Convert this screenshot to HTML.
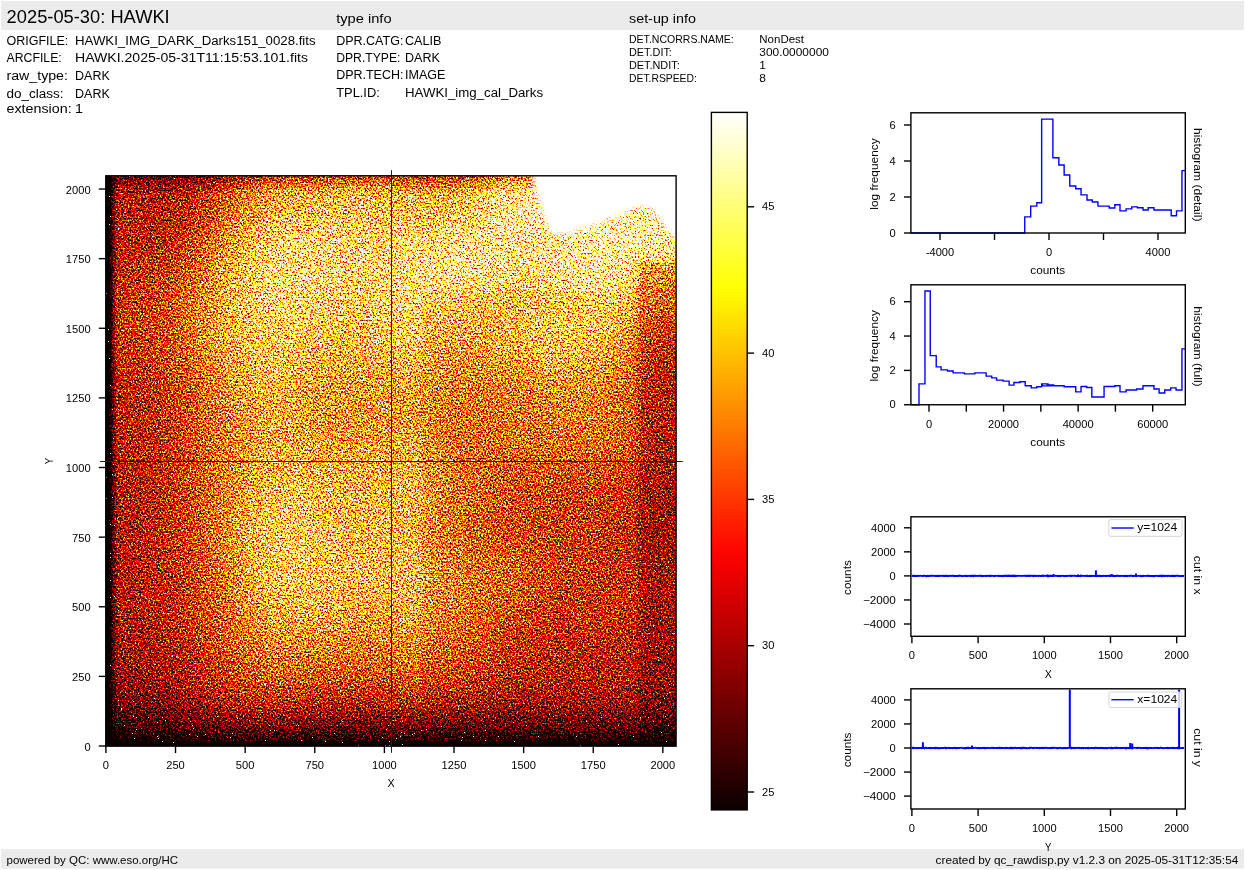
<!DOCTYPE html>
<html><head><meta charset="utf-8"><style>
html,body{margin:0;padding:0;background:#fff;width:1245px;height:870px;overflow:hidden}
svg{display:block;will-change:transform}
text{font-family:"Liberation Sans",sans-serif;}
</style></head><body>
<svg width="1245" height="870" viewBox="0 0 1245 870">
<defs><linearGradient id="hotgrad" x1="0" y1="0" x2="0" y2="1"><stop offset="0.0000" stop-color="rgb(255,255,255)"/><stop offset="0.0250" stop-color="rgb(255,255,230)"/><stop offset="0.0500" stop-color="rgb(255,255,205)"/><stop offset="0.0750" stop-color="rgb(255,255,180)"/><stop offset="0.1000" stop-color="rgb(255,255,155)"/><stop offset="0.1250" stop-color="rgb(255,255,129)"/><stop offset="0.1500" stop-color="rgb(255,255,104)"/><stop offset="0.1750" stop-color="rgb(255,255,79)"/><stop offset="0.2000" stop-color="rgb(255,255,54)"/><stop offset="0.2250" stop-color="rgb(255,255,29)"/><stop offset="0.2500" stop-color="rgb(255,255,4)"/><stop offset="0.2750" stop-color="rgb(255,241,0)"/><stop offset="0.3000" stop-color="rgb(255,224,0)"/><stop offset="0.3250" stop-color="rgb(255,207,0)"/><stop offset="0.3500" stop-color="rgb(255,191,0)"/><stop offset="0.3750" stop-color="rgb(255,174,0)"/><stop offset="0.4000" stop-color="rgb(255,157,0)"/><stop offset="0.4250" stop-color="rgb(255,141,0)"/><stop offset="0.4500" stop-color="rgb(255,124,0)"/><stop offset="0.4750" stop-color="rgb(255,107,0)"/><stop offset="0.5000" stop-color="rgb(255,90,0)"/><stop offset="0.5250" stop-color="rgb(255,74,0)"/><stop offset="0.5500" stop-color="rgb(255,57,0)"/><stop offset="0.5750" stop-color="rgb(255,40,0)"/><stop offset="0.6000" stop-color="rgb(255,23,0)"/><stop offset="0.6250" stop-color="rgb(255,7,0)"/><stop offset="0.6500" stop-color="rgb(245,0,0)"/><stop offset="0.6750" stop-color="rgb(228,0,0)"/><stop offset="0.7000" stop-color="rgb(211,0,0)"/><stop offset="0.7250" stop-color="rgb(195,0,0)"/><stop offset="0.7500" stop-color="rgb(178,0,0)"/><stop offset="0.7750" stop-color="rgb(161,0,0)"/><stop offset="0.8000" stop-color="rgb(144,0,0)"/><stop offset="0.8250" stop-color="rgb(128,0,0)"/><stop offset="0.8500" stop-color="rgb(111,0,0)"/><stop offset="0.8750" stop-color="rgb(94,0,0)"/><stop offset="0.9000" stop-color="rgb(78,0,0)"/><stop offset="0.9250" stop-color="rgb(61,0,0)"/><stop offset="0.9500" stop-color="rgb(44,0,0)"/><stop offset="0.9750" stop-color="rgb(27,0,0)"/><stop offset="1.0000" stop-color="rgb(11,0,0)"/></linearGradient></defs><defs>
<filter id="fblur" x="-20%" y="-20%" width="140%" height="140%" color-interpolation-filters="sRGB"><feGaussianBlur stdDeviation="9"/></filter>
<filter id="fsoft" x="-20%" y="-20%" width="140%" height="140%" color-interpolation-filters="sRGB"><feGaussianBlur stdDeviation="2.5"/></filter>
<filter id="fhot" x="0" y="0" width="1" height="1" filterUnits="objectBoundingBox" color-interpolation-filters="sRGB">
<feTurbulence type="fractalNoise" baseFrequency="0.6" numOctaves="2" seed="7" result="tn"/>
<feColorMatrix in="tn" type="matrix" values="1 0 0 0 0 1 0 0 0 0 1 0 0 0 0 0 0 0 0 1" result="ng"/>
<feComposite in="SourceGraphic" in2="ng" operator="arithmetic" k1="1.3495" k2="0.6253" k3="1.1592" k4="-0.8796" result="v"/>
<feTurbulence type="fractalNoise" baseFrequency="0.75" numOctaves="2" seed="23" result="tn2"/>
<feColorMatrix in="tn2" type="matrix" values="1 0 0 0 0 1 0 0 0 0 1 0 0 0 0 0 0 0 0 1" result="ng2"/>
<feComponentTransfer in="ng2" result="hotpx"><feFuncR type="discrete" tableValues="0 0 0 0 1"/><feFuncG type="discrete" tableValues="0 0 0 0 1"/><feFuncB type="discrete" tableValues="0 0 0 0 1"/><feFuncA type="linear" slope="0" intercept="1"/></feComponentTransfer>
<feComposite in="v" in2="hotpx" operator="arithmetic" k1="0" k2="1" k3="1" k4="0" result="v2"/>
<feComponentTransfer in="v2">
<feFuncR type="table" tableValues="0.0416 0.0833 0.1249 0.1666 0.2083 0.2499 0.2916 0.3333 0.3750 0.4166 0.4583 0.5000 0.5416 0.5833 0.6250 0.6666 0.7083 0.7500 0.7917 0.8333 0.8750 0.9167 0.9583 1.0000 1.0000 1.0000 1.0000 1.0000 1.0000 1.0000 1.0000 1.0000 1.0000 1.0000 1.0000 1.0000 1.0000 1.0000 1.0000 1.0000 1.0000 1.0000 1.0000 1.0000 1.0000 1.0000 1.0000 1.0000 1.0000 1.0000 1.0000 1.0000 1.0000 1.0000 1.0000 1.0000 1.0000 1.0000 1.0000 1.0000 1.0000 1.0000 1.0000 1.0000"/>
<feFuncG type="table" tableValues="0.0000 0.0000 0.0000 0.0000 0.0000 0.0000 0.0000 0.0000 0.0000 0.0000 0.0000 0.0000 0.0000 0.0000 0.0000 0.0000 0.0000 0.0000 0.0000 0.0000 0.0000 0.0000 0.0000 0.0000 0.0417 0.0833 0.1250 0.1667 0.2083 0.2500 0.2917 0.3333 0.3750 0.4167 0.4583 0.5000 0.5417 0.5833 0.6250 0.6667 0.7083 0.7500 0.7917 0.8333 0.8750 0.9167 0.9583 1.0000 1.0000 1.0000 1.0000 1.0000 1.0000 1.0000 1.0000 1.0000 1.0000 1.0000 1.0000 1.0000 1.0000 1.0000 1.0000 1.0000"/>
<feFuncB type="table" tableValues="0.0000 0.0000 0.0000 0.0000 0.0000 0.0000 0.0000 0.0000 0.0000 0.0000 0.0000 0.0000 0.0000 0.0000 0.0000 0.0000 0.0000 0.0000 0.0000 0.0000 0.0000 0.0000 0.0000 0.0000 0.0000 0.0000 0.0000 0.0000 0.0000 0.0000 0.0000 0.0000 0.0000 0.0000 0.0000 0.0000 0.0000 0.0000 0.0000 0.0000 0.0000 0.0000 0.0000 0.0000 0.0000 0.0000 0.0000 0.0000 0.0625 0.1250 0.1875 0.2500 0.3125 0.3750 0.4375 0.5000 0.5625 0.6250 0.6875 0.7500 0.8125 0.8750 0.9375 1.0000"/>
<feFuncA type="linear" slope="0" intercept="1"/>
</feComponentTransfer>
</filter>
<clipPath id="hmclip"><rect x="105.76" y="175.8" width="570.34" height="570.34"/></clipPath>
<linearGradient id="gleft" x1="0" y1="0" x2="1" y2="0"><stop offset="0" stop-color="#000" stop-opacity="0.85"/><stop offset="0.4" stop-color="#000" stop-opacity="0.4"/><stop offset="1" stop-color="#000" stop-opacity="0"/></linearGradient>
<linearGradient id="gbot" x1="0" y1="1" x2="0" y2="0"><stop offset="0" stop-color="#000" stop-opacity="0.6"/><stop offset="0.25" stop-color="#000" stop-opacity="0.3"/><stop offset="0.6" stop-color="#000" stop-opacity="0.08"/><stop offset="1" stop-color="#000" stop-opacity="0"/></linearGradient><linearGradient id="gtop" x1="0" y1="0" x2="0" y2="1"><stop offset="0" stop-color="#000" stop-opacity="0.4"/><stop offset="1" stop-color="#000" stop-opacity="0"/></linearGradient>
</defs>
<rect x="1.00" y="1.00" width="1243.00" height="29.00" fill="#ebebeb"/>
<rect x="1.00" y="849.20" width="1243.00" height="19.40" fill="#ebebeb"/>
<text x="6.60" y="22.90" font-size="17.67" textLength="163.12" lengthAdjust="spacingAndGlyphs" text-anchor="start" fill="#000">2025-05-30: HAWKI</text>
<text x="336.20" y="23.10" font-size="13.25" textLength="55.34" lengthAdjust="spacingAndGlyphs" text-anchor="start" fill="#000">type info</text>
<text x="629.00" y="22.60" font-size="13.25" textLength="66.89" lengthAdjust="spacingAndGlyphs" text-anchor="start" fill="#000">set-up info</text>
<text x="6.50" y="44.80" font-size="13.25" textLength="61.85" lengthAdjust="spacingAndGlyphs" text-anchor="start" fill="#000">ORIGFILE:</text>
<text x="75.00" y="44.80" font-size="13.25" textLength="240.61" lengthAdjust="spacingAndGlyphs" text-anchor="start" fill="#000">HAWKI_IMG_DARK_Darks151_0028.fits</text>
<text x="6.50" y="61.90" font-size="13.25" textLength="55.29" lengthAdjust="spacingAndGlyphs" text-anchor="start" fill="#000">ARCFILE:</text>
<text x="75.00" y="61.90" font-size="13.25" textLength="233.00" lengthAdjust="spacingAndGlyphs" text-anchor="start" fill="#000">HAWKI.2025-05-31T11:15:53.101.fits</text>
<text x="6.50" y="79.90" font-size="13.25" textLength="61.41" lengthAdjust="spacingAndGlyphs" text-anchor="start" fill="#000">raw_type:</text>
<text x="75.00" y="79.90" font-size="13.25" textLength="34.84" lengthAdjust="spacingAndGlyphs" text-anchor="start" fill="#000">DARK</text>
<text x="6.50" y="97.80" font-size="13.25" textLength="57.07" lengthAdjust="spacingAndGlyphs" text-anchor="start" fill="#000">do_class:</text>
<text x="75.00" y="97.80" font-size="13.25" textLength="34.84" lengthAdjust="spacingAndGlyphs" text-anchor="start" fill="#000">DARK</text>
<text x="6.50" y="113.30" font-size="13.25" textLength="65.15" lengthAdjust="spacingAndGlyphs" text-anchor="start" fill="#000">extension:</text>
<text x="75.00" y="113.30" font-size="13.25" textLength="7.95" lengthAdjust="spacingAndGlyphs" text-anchor="start" fill="#000">1</text>
<text x="336.20" y="44.90" font-size="13.25" textLength="67.22" lengthAdjust="spacingAndGlyphs" text-anchor="start" fill="#000">DPR.CATG:</text>
<text x="405.00" y="44.90" font-size="13.25" textLength="36.51" lengthAdjust="spacingAndGlyphs" text-anchor="start" fill="#000">CALIB</text>
<text x="336.20" y="61.90" font-size="13.25" textLength="64.29" lengthAdjust="spacingAndGlyphs" text-anchor="start" fill="#000">DPR.TYPE:</text>
<text x="405.00" y="61.90" font-size="13.25" textLength="34.84" lengthAdjust="spacingAndGlyphs" text-anchor="start" fill="#000">DARK</text>
<text x="336.20" y="79.40" font-size="13.25" textLength="67.25" lengthAdjust="spacingAndGlyphs" text-anchor="start" fill="#000">DPR.TECH:</text>
<text x="405.00" y="79.40" font-size="13.25" textLength="40.39" lengthAdjust="spacingAndGlyphs" text-anchor="start" fill="#000">IMAGE</text>
<text x="336.20" y="96.60" font-size="13.25" textLength="43.63" lengthAdjust="spacingAndGlyphs" text-anchor="start" fill="#000">TPL.ID:</text>
<text x="405.00" y="96.60" font-size="13.25" textLength="138.03" lengthAdjust="spacingAndGlyphs" text-anchor="start" fill="#000">HAWKI_img_cal_Darks</text>
<text x="629.00" y="42.90" font-size="11.04" textLength="104.70" lengthAdjust="spacingAndGlyphs" text-anchor="start" fill="#000">DET.NCORRS.NAME:</text>
<text x="759.30" y="42.90" font-size="11.04" textLength="44.71" lengthAdjust="spacingAndGlyphs" text-anchor="start" fill="#000">NonDest</text>
<text x="629.00" y="55.80" font-size="11.04" textLength="42.86" lengthAdjust="spacingAndGlyphs" text-anchor="start" fill="#000">DET.DIT:</text>
<text x="759.30" y="55.80" font-size="11.04" textLength="69.59" lengthAdjust="spacingAndGlyphs" text-anchor="start" fill="#000">300.0000000</text>
<text x="629.00" y="69.00" font-size="11.04" textLength="50.65" lengthAdjust="spacingAndGlyphs" text-anchor="start" fill="#000">DET.NDIT:</text>
<text x="759.30" y="69.00" font-size="11.04" textLength="6.63" lengthAdjust="spacingAndGlyphs" text-anchor="start" fill="#000">1</text>
<text x="629.00" y="82.00" font-size="11.04" textLength="67.87" lengthAdjust="spacingAndGlyphs" text-anchor="start" fill="#000">DET.RSPEED:</text>
<text x="759.30" y="82.00" font-size="11.04" textLength="6.63" lengthAdjust="spacingAndGlyphs" text-anchor="start" fill="#000">8</text>
<text x="6.50" y="863.90" font-size="11.04" textLength="171.63" lengthAdjust="spacingAndGlyphs" text-anchor="start" fill="#000">powered by QC: www.eso.org/HC</text>
<text x="1238.30" y="863.80" font-size="11.04" textLength="302.71" lengthAdjust="spacingAndGlyphs" text-anchor="end" fill="#000">created by qc_rawdisp.py v1.2.3 on 2025-05-31T12:35:54</text>
<g clip-path="url(#hmclip)"><g filter="url(#fhot)">
<rect x="104.76" y="174.8" width="572.34" height="572.3399999999999" fill="#808080"/>
<g filter="url(#fblur)">
<rect x="75.8" y="145.8" width="54.1" height="54.1" fill="#727272"/>
<rect x="129.5" y="145.8" width="24.1" height="54.1" fill="#727272"/>
<rect x="153.3" y="145.8" width="24.1" height="54.1" fill="#707070"/>
<rect x="177.1" y="145.8" width="24.1" height="54.1" fill="#787878"/>
<rect x="200.8" y="145.8" width="24.1" height="54.1" fill="#898989"/>
<rect x="224.6" y="145.8" width="24.1" height="54.1" fill="#9d9d9d"/>
<rect x="248.3" y="145.8" width="24.1" height="54.1" fill="#b3b3b3"/>
<rect x="272.1" y="145.8" width="24.1" height="54.1" fill="#bfbfbf"/>
<rect x="295.9" y="145.8" width="24.1" height="54.1" fill="#bfbfbf"/>
<rect x="319.6" y="145.8" width="24.1" height="54.1" fill="#c2c2c2"/>
<rect x="343.4" y="145.8" width="24.1" height="54.1" fill="#c8c8c8"/>
<rect x="367.2" y="145.8" width="24.1" height="54.1" fill="#c8c8c8"/>
<rect x="390.9" y="145.8" width="24.1" height="54.1" fill="#c2c2c2"/>
<rect x="414.7" y="145.8" width="24.1" height="54.1" fill="#bfbfbf"/>
<rect x="438.5" y="145.8" width="24.1" height="54.1" fill="#bfbfbf"/>
<rect x="462.2" y="145.8" width="24.1" height="54.1" fill="#cacaca"/>
<rect x="486.0" y="145.8" width="24.1" height="54.1" fill="#e0e0e0"/>
<rect x="509.8" y="145.8" width="24.1" height="54.1" fill="#f0f0f0"/>
<rect x="533.5" y="145.8" width="24.1" height="54.1" fill="#fafafa"/>
<rect x="557.3" y="145.8" width="24.1" height="54.1" fill="#ffffff"/>
<rect x="581.0" y="145.8" width="24.1" height="54.1" fill="#ffffff"/>
<rect x="604.8" y="145.8" width="24.1" height="54.1" fill="#ffffff"/>
<rect x="628.6" y="145.8" width="24.1" height="54.1" fill="#ffffff"/>
<rect x="652.3" y="145.8" width="53.8" height="54.1" fill="#ffffff"/>
<rect x="75.8" y="199.6" width="54.1" height="24.1" fill="#747474"/>
<rect x="129.5" y="199.6" width="24.1" height="24.1" fill="#747474"/>
<rect x="153.3" y="199.6" width="24.1" height="24.1" fill="#737373"/>
<rect x="177.1" y="199.6" width="24.1" height="24.1" fill="#7d7d7d"/>
<rect x="200.8" y="199.6" width="24.1" height="24.1" fill="#909090"/>
<rect x="224.6" y="199.6" width="24.1" height="24.1" fill="#a6a6a6"/>
<rect x="248.3" y="199.6" width="24.1" height="24.1" fill="#bcbcbc"/>
<rect x="272.1" y="199.6" width="24.1" height="24.1" fill="#c8c8c8"/>
<rect x="295.9" y="199.6" width="24.1" height="24.1" fill="#c8c8c8"/>
<rect x="319.6" y="199.6" width="24.1" height="24.1" fill="#cacaca"/>
<rect x="343.4" y="199.6" width="24.1" height="24.1" fill="#cdcdcd"/>
<rect x="367.2" y="199.6" width="24.1" height="24.1" fill="#cdcdcd"/>
<rect x="390.9" y="199.6" width="24.1" height="24.1" fill="#cacaca"/>
<rect x="414.7" y="199.6" width="24.1" height="24.1" fill="#c9c9c9"/>
<rect x="438.5" y="199.6" width="24.1" height="24.1" fill="#cacaca"/>
<rect x="462.2" y="199.6" width="24.1" height="24.1" fill="#d3d3d3"/>
<rect x="486.0" y="199.6" width="24.1" height="24.1" fill="#e3e3e3"/>
<rect x="509.8" y="199.6" width="24.1" height="24.1" fill="#efefef"/>
<rect x="533.5" y="199.6" width="24.1" height="24.1" fill="#f6f6f6"/>
<rect x="557.3" y="199.6" width="24.1" height="24.1" fill="#fbfbfb"/>
<rect x="581.0" y="199.6" width="24.1" height="24.1" fill="#fdfdfd"/>
<rect x="604.8" y="199.6" width="24.1" height="24.1" fill="#fefefe"/>
<rect x="628.6" y="199.6" width="24.1" height="24.1" fill="#fcfcfc"/>
<rect x="652.3" y="199.6" width="53.8" height="24.1" fill="#fbfbfb"/>
<rect x="75.8" y="223.3" width="54.1" height="24.1" fill="#777777"/>
<rect x="129.5" y="223.3" width="24.1" height="24.1" fill="#777777"/>
<rect x="153.3" y="223.3" width="24.1" height="24.1" fill="#797979"/>
<rect x="177.1" y="223.3" width="24.1" height="24.1" fill="#868686"/>
<rect x="200.8" y="223.3" width="24.1" height="24.1" fill="#9f9f9f"/>
<rect x="224.6" y="223.3" width="24.1" height="24.1" fill="#b8b8b8"/>
<rect x="248.3" y="223.3" width="24.1" height="24.1" fill="#cfcfcf"/>
<rect x="272.1" y="223.3" width="24.1" height="24.1" fill="#dadada"/>
<rect x="295.9" y="223.3" width="24.1" height="24.1" fill="#dadada"/>
<rect x="319.6" y="223.3" width="24.1" height="24.1" fill="#dadada"/>
<rect x="343.4" y="223.3" width="24.1" height="24.1" fill="#d8d8d8"/>
<rect x="367.2" y="223.3" width="24.1" height="24.1" fill="#d8d8d8"/>
<rect x="390.9" y="223.3" width="24.1" height="24.1" fill="#dadada"/>
<rect x="414.7" y="223.3" width="24.1" height="24.1" fill="#dddddd"/>
<rect x="438.5" y="223.3" width="24.1" height="24.1" fill="#e2e2e2"/>
<rect x="462.2" y="223.3" width="24.1" height="24.1" fill="#e6e6e6"/>
<rect x="486.0" y="223.3" width="24.1" height="24.1" fill="#eaeaea"/>
<rect x="509.8" y="223.3" width="24.1" height="24.1" fill="#ededed"/>
<rect x="533.5" y="223.3" width="24.1" height="24.1" fill="#efefef"/>
<rect x="557.3" y="223.3" width="24.1" height="24.1" fill="#f3f3f3"/>
<rect x="581.0" y="223.3" width="24.1" height="24.1" fill="#fafafa"/>
<rect x="604.8" y="223.3" width="24.1" height="24.1" fill="#fbfbfb"/>
<rect x="628.6" y="223.3" width="24.1" height="24.1" fill="#f6f6f6"/>
<rect x="652.3" y="223.3" width="53.8" height="24.1" fill="#f4f4f4"/>
<rect x="75.8" y="247.1" width="54.1" height="24.1" fill="#7b7b7b"/>
<rect x="129.5" y="247.1" width="24.1" height="24.1" fill="#7c7c7c"/>
<rect x="153.3" y="247.1" width="24.1" height="24.1" fill="#808080"/>
<rect x="177.1" y="247.1" width="24.1" height="24.1" fill="#909090"/>
<rect x="200.8" y="247.1" width="24.1" height="24.1" fill="#ababab"/>
<rect x="224.6" y="247.1" width="24.1" height="24.1" fill="#c3c3c3"/>
<rect x="248.3" y="247.1" width="24.1" height="24.1" fill="#d9d9d9"/>
<rect x="272.1" y="247.1" width="24.1" height="24.1" fill="#e3e3e3"/>
<rect x="295.9" y="247.1" width="24.1" height="24.1" fill="#e1e1e1"/>
<rect x="319.6" y="247.1" width="24.1" height="24.1" fill="#dfdfdf"/>
<rect x="343.4" y="247.1" width="24.1" height="24.1" fill="#dbdbdb"/>
<rect x="367.2" y="247.1" width="24.1" height="24.1" fill="#dcdcdc"/>
<rect x="390.9" y="247.1" width="24.1" height="24.1" fill="#e1e1e1"/>
<rect x="414.7" y="247.1" width="24.1" height="24.1" fill="#e6e6e6"/>
<rect x="438.5" y="247.1" width="24.1" height="24.1" fill="#ebebeb"/>
<rect x="462.2" y="247.1" width="24.1" height="24.1" fill="#ebebeb"/>
<rect x="486.0" y="247.1" width="24.1" height="24.1" fill="#e6e6e6"/>
<rect x="509.8" y="247.1" width="24.1" height="24.1" fill="#e5e5e5"/>
<rect x="533.5" y="247.1" width="24.1" height="24.1" fill="#e7e7e7"/>
<rect x="557.3" y="247.1" width="24.1" height="24.1" fill="#ececec"/>
<rect x="581.0" y="247.1" width="24.1" height="24.1" fill="#f3f3f3"/>
<rect x="604.8" y="247.1" width="24.1" height="24.1" fill="#f3f3f3"/>
<rect x="628.6" y="247.1" width="24.1" height="24.1" fill="#ebebeb"/>
<rect x="652.3" y="247.1" width="53.8" height="24.1" fill="#e7e7e7"/>
<rect x="75.8" y="270.9" width="54.1" height="24.1" fill="#808080"/>
<rect x="129.5" y="270.9" width="24.1" height="24.1" fill="#838383"/>
<rect x="153.3" y="270.9" width="24.1" height="24.1" fill="#898989"/>
<rect x="177.1" y="270.9" width="24.1" height="24.1" fill="#999999"/>
<rect x="200.8" y="270.9" width="24.1" height="24.1" fill="#b3b3b3"/>
<rect x="224.6" y="270.9" width="24.1" height="24.1" fill="#c9c9c9"/>
<rect x="248.3" y="270.9" width="24.1" height="24.1" fill="#dbdbdb"/>
<rect x="272.1" y="270.9" width="24.1" height="24.1" fill="#e1e1e1"/>
<rect x="295.9" y="270.9" width="24.1" height="24.1" fill="#dddddd"/>
<rect x="319.6" y="270.9" width="24.1" height="24.1" fill="#d9d9d9"/>
<rect x="343.4" y="270.9" width="24.1" height="24.1" fill="#d6d6d6"/>
<rect x="367.2" y="270.9" width="24.1" height="24.1" fill="#d8d8d8"/>
<rect x="390.9" y="270.9" width="24.1" height="24.1" fill="#e0e0e0"/>
<rect x="414.7" y="270.9" width="24.1" height="24.1" fill="#e5e5e5"/>
<rect x="438.5" y="270.9" width="24.1" height="24.1" fill="#e6e6e6"/>
<rect x="462.2" y="270.9" width="24.1" height="24.1" fill="#e3e3e3"/>
<rect x="486.0" y="270.9" width="24.1" height="24.1" fill="#dadada"/>
<rect x="509.8" y="270.9" width="24.1" height="24.1" fill="#d9d9d9"/>
<rect x="533.5" y="270.9" width="24.1" height="24.1" fill="#dedede"/>
<rect x="557.3" y="270.9" width="24.1" height="24.1" fill="#e4e4e4"/>
<rect x="581.0" y="270.9" width="24.1" height="24.1" fill="#eaeaea"/>
<rect x="604.8" y="270.9" width="24.1" height="24.1" fill="#e7e7e7"/>
<rect x="628.6" y="270.9" width="24.1" height="24.1" fill="#dadada"/>
<rect x="652.3" y="270.9" width="53.8" height="24.1" fill="#d4d4d4"/>
<rect x="75.8" y="294.6" width="54.1" height="24.1" fill="#828282"/>
<rect x="129.5" y="294.6" width="24.1" height="24.1" fill="#868686"/>
<rect x="153.3" y="294.6" width="24.1" height="24.1" fill="#8e8e8e"/>
<rect x="177.1" y="294.6" width="24.1" height="24.1" fill="#9f9f9f"/>
<rect x="200.8" y="294.6" width="24.1" height="24.1" fill="#b7b7b7"/>
<rect x="224.6" y="294.6" width="24.1" height="24.1" fill="#cbcbcb"/>
<rect x="248.3" y="294.6" width="24.1" height="24.1" fill="#d9d9d9"/>
<rect x="272.1" y="294.6" width="24.1" height="24.1" fill="#dddddd"/>
<rect x="295.9" y="294.6" width="24.1" height="24.1" fill="#d7d7d7"/>
<rect x="319.6" y="294.6" width="24.1" height="24.1" fill="#d3d3d3"/>
<rect x="343.4" y="294.6" width="24.1" height="24.1" fill="#d0d0d0"/>
<rect x="367.2" y="294.6" width="24.1" height="24.1" fill="#d3d3d3"/>
<rect x="390.9" y="294.6" width="24.1" height="24.1" fill="#dbdbdb"/>
<rect x="414.7" y="294.6" width="24.1" height="24.1" fill="#dedede"/>
<rect x="438.5" y="294.6" width="24.1" height="24.1" fill="#dcdcdc"/>
<rect x="462.2" y="294.6" width="24.1" height="24.1" fill="#d8d8d8"/>
<rect x="486.0" y="294.6" width="24.1" height="24.1" fill="#d3d3d3"/>
<rect x="509.8" y="294.6" width="24.1" height="24.1" fill="#d3d3d3"/>
<rect x="533.5" y="294.6" width="24.1" height="24.1" fill="#dadada"/>
<rect x="557.3" y="294.6" width="24.1" height="24.1" fill="#dfdfdf"/>
<rect x="581.0" y="294.6" width="24.1" height="24.1" fill="#e2e2e2"/>
<rect x="604.8" y="294.6" width="24.1" height="24.1" fill="#dbdbdb"/>
<rect x="628.6" y="294.6" width="24.1" height="24.1" fill="#c9c9c9"/>
<rect x="652.3" y="294.6" width="53.8" height="24.1" fill="#c0c0c0"/>
<rect x="75.8" y="318.4" width="54.1" height="24.1" fill="#828282"/>
<rect x="129.5" y="318.4" width="24.1" height="24.1" fill="#878787"/>
<rect x="153.3" y="318.4" width="24.1" height="24.1" fill="#909090"/>
<rect x="177.1" y="318.4" width="24.1" height="24.1" fill="#a0a0a0"/>
<rect x="200.8" y="318.4" width="24.1" height="24.1" fill="#b8b8b8"/>
<rect x="224.6" y="318.4" width="24.1" height="24.1" fill="#c9c9c9"/>
<rect x="248.3" y="318.4" width="24.1" height="24.1" fill="#d5d5d5"/>
<rect x="272.1" y="318.4" width="24.1" height="24.1" fill="#d7d7d7"/>
<rect x="295.9" y="318.4" width="24.1" height="24.1" fill="#d1d1d1"/>
<rect x="319.6" y="318.4" width="24.1" height="24.1" fill="#cccccc"/>
<rect x="343.4" y="318.4" width="24.1" height="24.1" fill="#c9c9c9"/>
<rect x="367.2" y="318.4" width="24.1" height="24.1" fill="#cbcbcb"/>
<rect x="390.9" y="318.4" width="24.1" height="24.1" fill="#d3d3d3"/>
<rect x="414.7" y="318.4" width="24.1" height="24.1" fill="#d4d4d4"/>
<rect x="438.5" y="318.4" width="24.1" height="24.1" fill="#cecece"/>
<rect x="462.2" y="318.4" width="24.1" height="24.1" fill="#cccccc"/>
<rect x="486.0" y="318.4" width="24.1" height="24.1" fill="#d0d0d0"/>
<rect x="509.8" y="318.4" width="24.1" height="24.1" fill="#d5d5d5"/>
<rect x="533.5" y="318.4" width="24.1" height="24.1" fill="#dbdbdb"/>
<rect x="557.3" y="318.4" width="24.1" height="24.1" fill="#dedede"/>
<rect x="581.0" y="318.4" width="24.1" height="24.1" fill="#dcdcdc"/>
<rect x="604.8" y="318.4" width="24.1" height="24.1" fill="#cfcfcf"/>
<rect x="628.6" y="318.4" width="24.1" height="24.1" fill="#b6b6b6"/>
<rect x="652.3" y="318.4" width="53.8" height="24.1" fill="#a9a9a9"/>
<rect x="75.8" y="342.1" width="54.1" height="24.1" fill="#7f7f7f"/>
<rect x="129.5" y="342.1" width="24.1" height="24.1" fill="#848484"/>
<rect x="153.3" y="342.1" width="24.1" height="24.1" fill="#8d8d8d"/>
<rect x="177.1" y="342.1" width="24.1" height="24.1" fill="#9d9d9d"/>
<rect x="200.8" y="342.1" width="24.1" height="24.1" fill="#b3b3b3"/>
<rect x="224.6" y="342.1" width="24.1" height="24.1" fill="#c3c3c3"/>
<rect x="248.3" y="342.1" width="24.1" height="24.1" fill="#cecece"/>
<rect x="272.1" y="342.1" width="24.1" height="24.1" fill="#d0d0d0"/>
<rect x="295.9" y="342.1" width="24.1" height="24.1" fill="#c8c8c8"/>
<rect x="319.6" y="342.1" width="24.1" height="24.1" fill="#c4c4c4"/>
<rect x="343.4" y="342.1" width="24.1" height="24.1" fill="#c1c1c1"/>
<rect x="367.2" y="342.1" width="24.1" height="24.1" fill="#c3c3c3"/>
<rect x="390.9" y="342.1" width="24.1" height="24.1" fill="#c9c9c9"/>
<rect x="414.7" y="342.1" width="24.1" height="24.1" fill="#c8c8c8"/>
<rect x="438.5" y="342.1" width="24.1" height="24.1" fill="#c1c1c1"/>
<rect x="462.2" y="342.1" width="24.1" height="24.1" fill="#c1c1c1"/>
<rect x="486.0" y="342.1" width="24.1" height="24.1" fill="#c7c7c7"/>
<rect x="509.8" y="342.1" width="24.1" height="24.1" fill="#cdcdcd"/>
<rect x="533.5" y="342.1" width="24.1" height="24.1" fill="#d3d3d3"/>
<rect x="557.3" y="342.1" width="24.1" height="24.1" fill="#d4d4d4"/>
<rect x="581.0" y="342.1" width="24.1" height="24.1" fill="#d1d1d1"/>
<rect x="604.8" y="342.1" width="24.1" height="24.1" fill="#c2c2c2"/>
<rect x="628.6" y="342.1" width="24.1" height="24.1" fill="#a8a8a8"/>
<rect x="652.3" y="342.1" width="53.8" height="24.1" fill="#9b9b9b"/>
<rect x="75.8" y="365.9" width="54.1" height="24.1" fill="#797979"/>
<rect x="129.5" y="365.9" width="24.1" height="24.1" fill="#7e7e7e"/>
<rect x="153.3" y="365.9" width="24.1" height="24.1" fill="#868686"/>
<rect x="177.1" y="365.9" width="24.1" height="24.1" fill="#959595"/>
<rect x="200.8" y="365.9" width="24.1" height="24.1" fill="#aaaaaa"/>
<rect x="224.6" y="365.9" width="24.1" height="24.1" fill="#bababa"/>
<rect x="248.3" y="365.9" width="24.1" height="24.1" fill="#c5c5c5"/>
<rect x="272.1" y="365.9" width="24.1" height="24.1" fill="#c7c7c7"/>
<rect x="295.9" y="365.9" width="24.1" height="24.1" fill="#bebebe"/>
<rect x="319.6" y="365.9" width="24.1" height="24.1" fill="#b9b9b9"/>
<rect x="343.4" y="365.9" width="24.1" height="24.1" fill="#b8b8b8"/>
<rect x="367.2" y="365.9" width="24.1" height="24.1" fill="#b9b9b9"/>
<rect x="390.9" y="365.9" width="24.1" height="24.1" fill="#bdbdbd"/>
<rect x="414.7" y="365.9" width="24.1" height="24.1" fill="#bcbcbc"/>
<rect x="438.5" y="365.9" width="24.1" height="24.1" fill="#b7b7b7"/>
<rect x="462.2" y="365.9" width="24.1" height="24.1" fill="#b5b5b5"/>
<rect x="486.0" y="365.9" width="24.1" height="24.1" fill="#b7b7b7"/>
<rect x="509.8" y="365.9" width="24.1" height="24.1" fill="#bbbbbb"/>
<rect x="533.5" y="365.9" width="24.1" height="24.1" fill="#c1c1c1"/>
<rect x="557.3" y="365.9" width="24.1" height="24.1" fill="#c2c2c2"/>
<rect x="581.0" y="365.9" width="24.1" height="24.1" fill="#bfbfbf"/>
<rect x="604.8" y="365.9" width="24.1" height="24.1" fill="#b3b3b3"/>
<rect x="628.6" y="365.9" width="24.1" height="24.1" fill="#9f9f9f"/>
<rect x="652.3" y="365.9" width="53.8" height="24.1" fill="#949494"/>
<rect x="75.8" y="389.7" width="54.1" height="24.1" fill="#767676"/>
<rect x="129.5" y="389.7" width="24.1" height="24.1" fill="#7a7a7a"/>
<rect x="153.3" y="389.7" width="24.1" height="24.1" fill="#838383"/>
<rect x="177.1" y="389.7" width="24.1" height="24.1" fill="#919191"/>
<rect x="200.8" y="389.7" width="24.1" height="24.1" fill="#a4a4a4"/>
<rect x="224.6" y="389.7" width="24.1" height="24.1" fill="#b3b3b3"/>
<rect x="248.3" y="389.7" width="24.1" height="24.1" fill="#bfbfbf"/>
<rect x="272.1" y="389.7" width="24.1" height="24.1" fill="#c1c1c1"/>
<rect x="295.9" y="389.7" width="24.1" height="24.1" fill="#b8b8b8"/>
<rect x="319.6" y="389.7" width="24.1" height="24.1" fill="#b4b4b4"/>
<rect x="343.4" y="389.7" width="24.1" height="24.1" fill="#b4b4b4"/>
<rect x="367.2" y="389.7" width="24.1" height="24.1" fill="#b5b5b5"/>
<rect x="390.9" y="389.7" width="24.1" height="24.1" fill="#b7b7b7"/>
<rect x="414.7" y="389.7" width="24.1" height="24.1" fill="#b6b6b6"/>
<rect x="438.5" y="389.7" width="24.1" height="24.1" fill="#b1b1b1"/>
<rect x="462.2" y="389.7" width="24.1" height="24.1" fill="#aeaeae"/>
<rect x="486.0" y="389.7" width="24.1" height="24.1" fill="#aeaeae"/>
<rect x="509.8" y="389.7" width="24.1" height="24.1" fill="#b1b1b1"/>
<rect x="533.5" y="389.7" width="24.1" height="24.1" fill="#b6b6b6"/>
<rect x="557.3" y="389.7" width="24.1" height="24.1" fill="#b7b7b7"/>
<rect x="581.0" y="389.7" width="24.1" height="24.1" fill="#b4b4b4"/>
<rect x="604.8" y="389.7" width="24.1" height="24.1" fill="#ababab"/>
<rect x="628.6" y="389.7" width="24.1" height="24.1" fill="#9a9a9a"/>
<rect x="652.3" y="389.7" width="53.8" height="24.1" fill="#919191"/>
<rect x="75.8" y="413.4" width="54.1" height="24.1" fill="#767676"/>
<rect x="129.5" y="413.4" width="24.1" height="24.1" fill="#7a7a7a"/>
<rect x="153.3" y="413.4" width="24.1" height="24.1" fill="#838383"/>
<rect x="177.1" y="413.4" width="24.1" height="24.1" fill="#909090"/>
<rect x="200.8" y="413.4" width="24.1" height="24.1" fill="#a1a1a1"/>
<rect x="224.6" y="413.4" width="24.1" height="24.1" fill="#b0b0b0"/>
<rect x="248.3" y="413.4" width="24.1" height="24.1" fill="#bcbcbc"/>
<rect x="272.1" y="413.4" width="24.1" height="24.1" fill="#bebebe"/>
<rect x="295.9" y="413.4" width="24.1" height="24.1" fill="#b7b7b7"/>
<rect x="319.6" y="413.4" width="24.1" height="24.1" fill="#b4b4b4"/>
<rect x="343.4" y="413.4" width="24.1" height="24.1" fill="#b4b4b4"/>
<rect x="367.2" y="413.4" width="24.1" height="24.1" fill="#b5b5b5"/>
<rect x="390.9" y="413.4" width="24.1" height="24.1" fill="#b7b7b7"/>
<rect x="414.7" y="413.4" width="24.1" height="24.1" fill="#b5b5b5"/>
<rect x="438.5" y="413.4" width="24.1" height="24.1" fill="#afafaf"/>
<rect x="462.2" y="413.4" width="24.1" height="24.1" fill="#acacac"/>
<rect x="486.0" y="413.4" width="24.1" height="24.1" fill="#acacac"/>
<rect x="509.8" y="413.4" width="24.1" height="24.1" fill="#aeaeae"/>
<rect x="533.5" y="413.4" width="24.1" height="24.1" fill="#b1b1b1"/>
<rect x="557.3" y="413.4" width="24.1" height="24.1" fill="#b2b2b2"/>
<rect x="581.0" y="413.4" width="24.1" height="24.1" fill="#b1b1b1"/>
<rect x="604.8" y="413.4" width="24.1" height="24.1" fill="#a9a9a9"/>
<rect x="628.6" y="413.4" width="24.1" height="24.1" fill="#999999"/>
<rect x="652.3" y="413.4" width="53.8" height="24.1" fill="#919191"/>
<rect x="75.8" y="437.2" width="54.1" height="24.1" fill="#757575"/>
<rect x="129.5" y="437.2" width="24.1" height="24.1" fill="#797979"/>
<rect x="153.3" y="437.2" width="24.1" height="24.1" fill="#818181"/>
<rect x="177.1" y="437.2" width="24.1" height="24.1" fill="#8e8e8e"/>
<rect x="200.8" y="437.2" width="24.1" height="24.1" fill="#9f9f9f"/>
<rect x="224.6" y="437.2" width="24.1" height="24.1" fill="#afafaf"/>
<rect x="248.3" y="437.2" width="24.1" height="24.1" fill="#bcbcbc"/>
<rect x="272.1" y="437.2" width="24.1" height="24.1" fill="#c0c0c0"/>
<rect x="295.9" y="437.2" width="24.1" height="24.1" fill="#bcbcbc"/>
<rect x="319.6" y="437.2" width="24.1" height="24.1" fill="#b9b9b9"/>
<rect x="343.4" y="437.2" width="24.1" height="24.1" fill="#b8b8b8"/>
<rect x="367.2" y="437.2" width="24.1" height="24.1" fill="#b9b9b9"/>
<rect x="390.9" y="437.2" width="24.1" height="24.1" fill="#bcbcbc"/>
<rect x="414.7" y="437.2" width="24.1" height="24.1" fill="#b9b9b9"/>
<rect x="438.5" y="437.2" width="24.1" height="24.1" fill="#b0b0b0"/>
<rect x="462.2" y="437.2" width="24.1" height="24.1" fill="#aaaaaa"/>
<rect x="486.0" y="437.2" width="24.1" height="24.1" fill="#a8a8a8"/>
<rect x="509.8" y="437.2" width="24.1" height="24.1" fill="#a8a8a8"/>
<rect x="533.5" y="437.2" width="24.1" height="24.1" fill="#a8a8a8"/>
<rect x="557.3" y="437.2" width="24.1" height="24.1" fill="#a9a9a9"/>
<rect x="581.0" y="437.2" width="24.1" height="24.1" fill="#a8a8a8"/>
<rect x="604.8" y="437.2" width="24.1" height="24.1" fill="#a2a2a2"/>
<rect x="628.6" y="437.2" width="24.1" height="24.1" fill="#959595"/>
<rect x="652.3" y="437.2" width="53.8" height="24.1" fill="#8f8f8f"/>
<rect x="75.8" y="461.0" width="54.1" height="24.1" fill="#737373"/>
<rect x="129.5" y="461.0" width="24.1" height="24.1" fill="#777777"/>
<rect x="153.3" y="461.0" width="24.1" height="24.1" fill="#7f7f7f"/>
<rect x="177.1" y="461.0" width="24.1" height="24.1" fill="#8c8c8c"/>
<rect x="200.8" y="461.0" width="24.1" height="24.1" fill="#9e9e9e"/>
<rect x="224.6" y="461.0" width="24.1" height="24.1" fill="#b0b0b0"/>
<rect x="248.3" y="461.0" width="24.1" height="24.1" fill="#c0c0c0"/>
<rect x="272.1" y="461.0" width="24.1" height="24.1" fill="#c7c7c7"/>
<rect x="295.9" y="461.0" width="24.1" height="24.1" fill="#c6c6c6"/>
<rect x="319.6" y="461.0" width="24.1" height="24.1" fill="#c4c4c4"/>
<rect x="343.4" y="461.0" width="24.1" height="24.1" fill="#c1c1c1"/>
<rect x="367.2" y="461.0" width="24.1" height="24.1" fill="#c1c1c1"/>
<rect x="390.9" y="461.0" width="24.1" height="24.1" fill="#c4c4c4"/>
<rect x="414.7" y="461.0" width="24.1" height="24.1" fill="#bfbfbf"/>
<rect x="438.5" y="461.0" width="24.1" height="24.1" fill="#b2b2b2"/>
<rect x="462.2" y="461.0" width="24.1" height="24.1" fill="#a9a9a9"/>
<rect x="486.0" y="461.0" width="24.1" height="24.1" fill="#a3a3a3"/>
<rect x="509.8" y="461.0" width="24.1" height="24.1" fill="#9f9f9f"/>
<rect x="533.5" y="461.0" width="24.1" height="24.1" fill="#9d9d9d"/>
<rect x="557.3" y="461.0" width="24.1" height="24.1" fill="#9b9b9b"/>
<rect x="581.0" y="461.0" width="24.1" height="24.1" fill="#9a9a9a"/>
<rect x="604.8" y="461.0" width="24.1" height="24.1" fill="#959595"/>
<rect x="628.6" y="461.0" width="24.1" height="24.1" fill="#8d8d8d"/>
<rect x="652.3" y="461.0" width="53.8" height="24.1" fill="#898989"/>
<rect x="75.8" y="484.7" width="54.1" height="24.1" fill="#727272"/>
<rect x="129.5" y="484.7" width="24.1" height="24.1" fill="#767676"/>
<rect x="153.3" y="484.7" width="24.1" height="24.1" fill="#7d7d7d"/>
<rect x="177.1" y="484.7" width="24.1" height="24.1" fill="#8b8b8b"/>
<rect x="200.8" y="484.7" width="24.1" height="24.1" fill="#9e9e9e"/>
<rect x="224.6" y="484.7" width="24.1" height="24.1" fill="#b2b2b2"/>
<rect x="248.3" y="484.7" width="24.1" height="24.1" fill="#c4c4c4"/>
<rect x="272.1" y="484.7" width="24.1" height="24.1" fill="#cdcdcd"/>
<rect x="295.9" y="484.7" width="24.1" height="24.1" fill="#cbcbcb"/>
<rect x="319.6" y="484.7" width="24.1" height="24.1" fill="#c9c9c9"/>
<rect x="343.4" y="484.7" width="24.1" height="24.1" fill="#c5c5c5"/>
<rect x="367.2" y="484.7" width="24.1" height="24.1" fill="#c5c5c5"/>
<rect x="390.9" y="484.7" width="24.1" height="24.1" fill="#c7c7c7"/>
<rect x="414.7" y="484.7" width="24.1" height="24.1" fill="#c1c1c1"/>
<rect x="438.5" y="484.7" width="24.1" height="24.1" fill="#b1b1b1"/>
<rect x="462.2" y="484.7" width="24.1" height="24.1" fill="#a6a6a6"/>
<rect x="486.0" y="484.7" width="24.1" height="24.1" fill="#9e9e9e"/>
<rect x="509.8" y="484.7" width="24.1" height="24.1" fill="#999999"/>
<rect x="533.5" y="484.7" width="24.1" height="24.1" fill="#969696"/>
<rect x="557.3" y="484.7" width="24.1" height="24.1" fill="#939393"/>
<rect x="581.0" y="484.7" width="24.1" height="24.1" fill="#919191"/>
<rect x="604.8" y="484.7" width="24.1" height="24.1" fill="#8d8d8d"/>
<rect x="628.6" y="484.7" width="24.1" height="24.1" fill="#888888"/>
<rect x="652.3" y="484.7" width="53.8" height="24.1" fill="#858585"/>
<rect x="75.8" y="508.5" width="54.1" height="24.1" fill="#727272"/>
<rect x="129.5" y="508.5" width="24.1" height="24.1" fill="#767676"/>
<rect x="153.3" y="508.5" width="24.1" height="24.1" fill="#7d7d7d"/>
<rect x="177.1" y="508.5" width="24.1" height="24.1" fill="#8b8b8b"/>
<rect x="200.8" y="508.5" width="24.1" height="24.1" fill="#a0a0a0"/>
<rect x="224.6" y="508.5" width="24.1" height="24.1" fill="#b5b5b5"/>
<rect x="248.3" y="508.5" width="24.1" height="24.1" fill="#cacaca"/>
<rect x="272.1" y="508.5" width="24.1" height="24.1" fill="#d2d2d2"/>
<rect x="295.9" y="508.5" width="24.1" height="24.1" fill="#cdcdcd"/>
<rect x="319.6" y="508.5" width="24.1" height="24.1" fill="#c9c9c9"/>
<rect x="343.4" y="508.5" width="24.1" height="24.1" fill="#c5c5c5"/>
<rect x="367.2" y="508.5" width="24.1" height="24.1" fill="#c4c4c4"/>
<rect x="390.9" y="508.5" width="24.1" height="24.1" fill="#c5c5c5"/>
<rect x="414.7" y="508.5" width="24.1" height="24.1" fill="#bdbdbd"/>
<rect x="438.5" y="508.5" width="24.1" height="24.1" fill="#adadad"/>
<rect x="462.2" y="508.5" width="24.1" height="24.1" fill="#a1a1a1"/>
<rect x="486.0" y="508.5" width="24.1" height="24.1" fill="#9b9b9b"/>
<rect x="509.8" y="508.5" width="24.1" height="24.1" fill="#969696"/>
<rect x="533.5" y="508.5" width="24.1" height="24.1" fill="#939393"/>
<rect x="557.3" y="508.5" width="24.1" height="24.1" fill="#919191"/>
<rect x="581.0" y="508.5" width="24.1" height="24.1" fill="#8f8f8f"/>
<rect x="604.8" y="508.5" width="24.1" height="24.1" fill="#8b8b8b"/>
<rect x="628.6" y="508.5" width="24.1" height="24.1" fill="#858585"/>
<rect x="652.3" y="508.5" width="53.8" height="24.1" fill="#828282"/>
<rect x="75.8" y="532.3" width="54.1" height="24.1" fill="#727272"/>
<rect x="129.5" y="532.3" width="24.1" height="24.1" fill="#767676"/>
<rect x="153.3" y="532.3" width="24.1" height="24.1" fill="#7d7d7d"/>
<rect x="177.1" y="532.3" width="24.1" height="24.1" fill="#8a8a8a"/>
<rect x="200.8" y="532.3" width="24.1" height="24.1" fill="#9f9f9f"/>
<rect x="224.6" y="532.3" width="24.1" height="24.1" fill="#b5b5b5"/>
<rect x="248.3" y="532.3" width="24.1" height="24.1" fill="#cbcbcb"/>
<rect x="272.1" y="532.3" width="24.1" height="24.1" fill="#d4d4d4"/>
<rect x="295.9" y="532.3" width="24.1" height="24.1" fill="#cfcfcf"/>
<rect x="319.6" y="532.3" width="24.1" height="24.1" fill="#cbcbcb"/>
<rect x="343.4" y="532.3" width="24.1" height="24.1" fill="#c7c7c7"/>
<rect x="367.2" y="532.3" width="24.1" height="24.1" fill="#c5c5c5"/>
<rect x="390.9" y="532.3" width="24.1" height="24.1" fill="#c5c5c5"/>
<rect x="414.7" y="532.3" width="24.1" height="24.1" fill="#bebebe"/>
<rect x="438.5" y="532.3" width="24.1" height="24.1" fill="#aeaeae"/>
<rect x="462.2" y="532.3" width="24.1" height="24.1" fill="#a4a4a4"/>
<rect x="486.0" y="532.3" width="24.1" height="24.1" fill="#9e9e9e"/>
<rect x="509.8" y="532.3" width="24.1" height="24.1" fill="#999999"/>
<rect x="533.5" y="532.3" width="24.1" height="24.1" fill="#949494"/>
<rect x="557.3" y="532.3" width="24.1" height="24.1" fill="#909090"/>
<rect x="581.0" y="532.3" width="24.1" height="24.1" fill="#8e8e8e"/>
<rect x="604.8" y="532.3" width="24.1" height="24.1" fill="#8a8a8a"/>
<rect x="628.6" y="532.3" width="24.1" height="24.1" fill="#858585"/>
<rect x="652.3" y="532.3" width="53.8" height="24.1" fill="#828282"/>
<rect x="75.8" y="556.0" width="54.1" height="24.1" fill="#727272"/>
<rect x="129.5" y="556.0" width="24.1" height="24.1" fill="#757575"/>
<rect x="153.3" y="556.0" width="24.1" height="24.1" fill="#7b7b7b"/>
<rect x="177.1" y="556.0" width="24.1" height="24.1" fill="#888888"/>
<rect x="200.8" y="556.0" width="24.1" height="24.1" fill="#9b9b9b"/>
<rect x="224.6" y="556.0" width="24.1" height="24.1" fill="#b1b1b1"/>
<rect x="248.3" y="556.0" width="24.1" height="24.1" fill="#c8c8c8"/>
<rect x="272.1" y="556.0" width="24.1" height="24.1" fill="#d3d3d3"/>
<rect x="295.9" y="556.0" width="24.1" height="24.1" fill="#d1d1d1"/>
<rect x="319.6" y="556.0" width="24.1" height="24.1" fill="#cecece"/>
<rect x="343.4" y="556.0" width="24.1" height="24.1" fill="#cbcbcb"/>
<rect x="367.2" y="556.0" width="24.1" height="24.1" fill="#c9c9c9"/>
<rect x="390.9" y="556.0" width="24.1" height="24.1" fill="#c9c9c9"/>
<rect x="414.7" y="556.0" width="24.1" height="24.1" fill="#c2c2c2"/>
<rect x="438.5" y="556.0" width="24.1" height="24.1" fill="#b5b5b5"/>
<rect x="462.2" y="556.0" width="24.1" height="24.1" fill="#acacac"/>
<rect x="486.0" y="556.0" width="24.1" height="24.1" fill="#a8a8a8"/>
<rect x="509.8" y="556.0" width="24.1" height="24.1" fill="#a1a1a1"/>
<rect x="533.5" y="556.0" width="24.1" height="24.1" fill="#969696"/>
<rect x="557.3" y="556.0" width="24.1" height="24.1" fill="#909090"/>
<rect x="581.0" y="556.0" width="24.1" height="24.1" fill="#8e8e8e"/>
<rect x="604.8" y="556.0" width="24.1" height="24.1" fill="#8b8b8b"/>
<rect x="628.6" y="556.0" width="24.1" height="24.1" fill="#878787"/>
<rect x="652.3" y="556.0" width="53.8" height="24.1" fill="#858585"/>
<rect x="75.8" y="579.8" width="54.1" height="24.1" fill="#727272"/>
<rect x="129.5" y="579.8" width="24.1" height="24.1" fill="#747474"/>
<rect x="153.3" y="579.8" width="24.1" height="24.1" fill="#797979"/>
<rect x="177.1" y="579.8" width="24.1" height="24.1" fill="#858585"/>
<rect x="200.8" y="579.8" width="24.1" height="24.1" fill="#989898"/>
<rect x="224.6" y="579.8" width="24.1" height="24.1" fill="#acacac"/>
<rect x="248.3" y="579.8" width="24.1" height="24.1" fill="#c1c1c1"/>
<rect x="272.1" y="579.8" width="24.1" height="24.1" fill="#cccccc"/>
<rect x="295.9" y="579.8" width="24.1" height="24.1" fill="#cccccc"/>
<rect x="319.6" y="579.8" width="24.1" height="24.1" fill="#cacaca"/>
<rect x="343.4" y="579.8" width="24.1" height="24.1" fill="#c7c7c7"/>
<rect x="367.2" y="579.8" width="24.1" height="24.1" fill="#c5c5c5"/>
<rect x="390.9" y="579.8" width="24.1" height="24.1" fill="#c6c6c6"/>
<rect x="414.7" y="579.8" width="24.1" height="24.1" fill="#c1c1c1"/>
<rect x="438.5" y="579.8" width="24.1" height="24.1" fill="#b6b6b6"/>
<rect x="462.2" y="579.8" width="24.1" height="24.1" fill="#aeaeae"/>
<rect x="486.0" y="579.8" width="24.1" height="24.1" fill="#a8a8a8"/>
<rect x="509.8" y="579.8" width="24.1" height="24.1" fill="#9f9f9f"/>
<rect x="533.5" y="579.8" width="24.1" height="24.1" fill="#949494"/>
<rect x="557.3" y="579.8" width="24.1" height="24.1" fill="#8e8e8e"/>
<rect x="581.0" y="579.8" width="24.1" height="24.1" fill="#8c8c8c"/>
<rect x="604.8" y="579.8" width="24.1" height="24.1" fill="#8a8a8a"/>
<rect x="628.6" y="579.8" width="24.1" height="24.1" fill="#878787"/>
<rect x="652.3" y="579.8" width="53.8" height="24.1" fill="#858585"/>
<rect x="75.8" y="603.6" width="54.1" height="24.1" fill="#707070"/>
<rect x="129.5" y="603.6" width="24.1" height="24.1" fill="#727272"/>
<rect x="153.3" y="603.6" width="24.1" height="24.1" fill="#777777"/>
<rect x="177.1" y="603.6" width="24.1" height="24.1" fill="#838383"/>
<rect x="200.8" y="603.6" width="24.1" height="24.1" fill="#959595"/>
<rect x="224.6" y="603.6" width="24.1" height="24.1" fill="#a6a6a6"/>
<rect x="248.3" y="603.6" width="24.1" height="24.1" fill="#b7b7b7"/>
<rect x="272.1" y="603.6" width="24.1" height="24.1" fill="#c0c0c0"/>
<rect x="295.9" y="603.6" width="24.1" height="24.1" fill="#c0c0c0"/>
<rect x="319.6" y="603.6" width="24.1" height="24.1" fill="#bebebe"/>
<rect x="343.4" y="603.6" width="24.1" height="24.1" fill="#bababa"/>
<rect x="367.2" y="603.6" width="24.1" height="24.1" fill="#bababa"/>
<rect x="390.9" y="603.6" width="24.1" height="24.1" fill="#bdbdbd"/>
<rect x="414.7" y="603.6" width="24.1" height="24.1" fill="#bababa"/>
<rect x="438.5" y="603.6" width="24.1" height="24.1" fill="#b2b2b2"/>
<rect x="462.2" y="603.6" width="24.1" height="24.1" fill="#a8a8a8"/>
<rect x="486.0" y="603.6" width="24.1" height="24.1" fill="#9d9d9d"/>
<rect x="509.8" y="603.6" width="24.1" height="24.1" fill="#949494"/>
<rect x="533.5" y="603.6" width="24.1" height="24.1" fill="#8d8d8d"/>
<rect x="557.3" y="603.6" width="24.1" height="24.1" fill="#898989"/>
<rect x="581.0" y="603.6" width="24.1" height="24.1" fill="#898989"/>
<rect x="604.8" y="603.6" width="24.1" height="24.1" fill="#878787"/>
<rect x="628.6" y="603.6" width="24.1" height="24.1" fill="#848484"/>
<rect x="652.3" y="603.6" width="53.8" height="24.1" fill="#828282"/>
<rect x="75.8" y="627.3" width="54.1" height="24.1" fill="#6c6c6c"/>
<rect x="129.5" y="627.3" width="24.1" height="24.1" fill="#6f6f6f"/>
<rect x="153.3" y="627.3" width="24.1" height="24.1" fill="#747474"/>
<rect x="177.1" y="627.3" width="24.1" height="24.1" fill="#7e7e7e"/>
<rect x="200.8" y="627.3" width="24.1" height="24.1" fill="#8f8f8f"/>
<rect x="224.6" y="627.3" width="24.1" height="24.1" fill="#9e9e9e"/>
<rect x="248.3" y="627.3" width="24.1" height="24.1" fill="#ababab"/>
<rect x="272.1" y="627.3" width="24.1" height="24.1" fill="#b2b2b2"/>
<rect x="295.9" y="627.3" width="24.1" height="24.1" fill="#b1b1b1"/>
<rect x="319.6" y="627.3" width="24.1" height="24.1" fill="#afafaf"/>
<rect x="343.4" y="627.3" width="24.1" height="24.1" fill="#acacac"/>
<rect x="367.2" y="627.3" width="24.1" height="24.1" fill="#acacac"/>
<rect x="390.9" y="627.3" width="24.1" height="24.1" fill="#b0b0b0"/>
<rect x="414.7" y="627.3" width="24.1" height="24.1" fill="#afafaf"/>
<rect x="438.5" y="627.3" width="24.1" height="24.1" fill="#a8a8a8"/>
<rect x="462.2" y="627.3" width="24.1" height="24.1" fill="#9f9f9f"/>
<rect x="486.0" y="627.3" width="24.1" height="24.1" fill="#939393"/>
<rect x="509.8" y="627.3" width="24.1" height="24.1" fill="#8b8b8b"/>
<rect x="533.5" y="627.3" width="24.1" height="24.1" fill="#878787"/>
<rect x="557.3" y="627.3" width="24.1" height="24.1" fill="#848484"/>
<rect x="581.0" y="627.3" width="24.1" height="24.1" fill="#848484"/>
<rect x="604.8" y="627.3" width="24.1" height="24.1" fill="#838383"/>
<rect x="628.6" y="627.3" width="24.1" height="24.1" fill="#808080"/>
<rect x="652.3" y="627.3" width="53.8" height="24.1" fill="#7f7f7f"/>
<rect x="75.8" y="651.1" width="54.1" height="24.1" fill="#676767"/>
<rect x="129.5" y="651.1" width="24.1" height="24.1" fill="#696969"/>
<rect x="153.3" y="651.1" width="24.1" height="24.1" fill="#6e6e6e"/>
<rect x="177.1" y="651.1" width="24.1" height="24.1" fill="#777777"/>
<rect x="200.8" y="651.1" width="24.1" height="24.1" fill="#858585"/>
<rect x="224.6" y="651.1" width="24.1" height="24.1" fill="#929292"/>
<rect x="248.3" y="651.1" width="24.1" height="24.1" fill="#9e9e9e"/>
<rect x="272.1" y="651.1" width="24.1" height="24.1" fill="#a2a2a2"/>
<rect x="295.9" y="651.1" width="24.1" height="24.1" fill="#a0a0a0"/>
<rect x="319.6" y="651.1" width="24.1" height="24.1" fill="#9d9d9d"/>
<rect x="343.4" y="651.1" width="24.1" height="24.1" fill="#9b9b9b"/>
<rect x="367.2" y="651.1" width="24.1" height="24.1" fill="#9c9c9c"/>
<rect x="390.9" y="651.1" width="24.1" height="24.1" fill="#a1a1a1"/>
<rect x="414.7" y="651.1" width="24.1" height="24.1" fill="#a1a1a1"/>
<rect x="438.5" y="651.1" width="24.1" height="24.1" fill="#9b9b9b"/>
<rect x="462.2" y="651.1" width="24.1" height="24.1" fill="#939393"/>
<rect x="486.0" y="651.1" width="24.1" height="24.1" fill="#8a8a8a"/>
<rect x="509.8" y="651.1" width="24.1" height="24.1" fill="#848484"/>
<rect x="533.5" y="651.1" width="24.1" height="24.1" fill="#818181"/>
<rect x="557.3" y="651.1" width="24.1" height="24.1" fill="#7f7f7f"/>
<rect x="581.0" y="651.1" width="24.1" height="24.1" fill="#7f7f7f"/>
<rect x="604.8" y="651.1" width="24.1" height="24.1" fill="#7e7e7e"/>
<rect x="628.6" y="651.1" width="24.1" height="24.1" fill="#7c7c7c"/>
<rect x="652.3" y="651.1" width="53.8" height="24.1" fill="#7b7b7b"/>
<rect x="75.8" y="674.8" width="54.1" height="24.1" fill="#5f5f5f"/>
<rect x="129.5" y="674.8" width="24.1" height="24.1" fill="#626262"/>
<rect x="153.3" y="674.8" width="24.1" height="24.1" fill="#686868"/>
<rect x="177.1" y="674.8" width="24.1" height="24.1" fill="#707070"/>
<rect x="200.8" y="674.8" width="24.1" height="24.1" fill="#7c7c7c"/>
<rect x="224.6" y="674.8" width="24.1" height="24.1" fill="#868686"/>
<rect x="248.3" y="674.8" width="24.1" height="24.1" fill="#8f8f8f"/>
<rect x="272.1" y="674.8" width="24.1" height="24.1" fill="#929292"/>
<rect x="295.9" y="674.8" width="24.1" height="24.1" fill="#8e8e8e"/>
<rect x="319.6" y="674.8" width="24.1" height="24.1" fill="#8b8b8b"/>
<rect x="343.4" y="674.8" width="24.1" height="24.1" fill="#8a8a8a"/>
<rect x="367.2" y="674.8" width="24.1" height="24.1" fill="#8c8c8c"/>
<rect x="390.9" y="674.8" width="24.1" height="24.1" fill="#909090"/>
<rect x="414.7" y="674.8" width="24.1" height="24.1" fill="#919191"/>
<rect x="438.5" y="674.8" width="24.1" height="24.1" fill="#8d8d8d"/>
<rect x="462.2" y="674.8" width="24.1" height="24.1" fill="#878787"/>
<rect x="486.0" y="674.8" width="24.1" height="24.1" fill="#818181"/>
<rect x="509.8" y="674.8" width="24.1" height="24.1" fill="#7d7d7d"/>
<rect x="533.5" y="674.8" width="24.1" height="24.1" fill="#7b7b7b"/>
<rect x="557.3" y="674.8" width="24.1" height="24.1" fill="#7a7a7a"/>
<rect x="581.0" y="674.8" width="24.1" height="24.1" fill="#7a7a7a"/>
<rect x="604.8" y="674.8" width="24.1" height="24.1" fill="#7a7a7a"/>
<rect x="628.6" y="674.8" width="24.1" height="24.1" fill="#787878"/>
<rect x="652.3" y="674.8" width="53.8" height="24.1" fill="#777777"/>
<rect x="75.8" y="698.6" width="54.1" height="24.1" fill="#565656"/>
<rect x="129.5" y="698.6" width="24.1" height="24.1" fill="#5a5a5a"/>
<rect x="153.3" y="698.6" width="24.1" height="24.1" fill="#606060"/>
<rect x="177.1" y="698.6" width="24.1" height="24.1" fill="#696969"/>
<rect x="200.8" y="698.6" width="24.1" height="24.1" fill="#737373"/>
<rect x="224.6" y="698.6" width="24.1" height="24.1" fill="#7b7b7b"/>
<rect x="248.3" y="698.6" width="24.1" height="24.1" fill="#818181"/>
<rect x="272.1" y="698.6" width="24.1" height="24.1" fill="#818181"/>
<rect x="295.9" y="698.6" width="24.1" height="24.1" fill="#7b7b7b"/>
<rect x="319.6" y="698.6" width="24.1" height="24.1" fill="#797979"/>
<rect x="343.4" y="698.6" width="24.1" height="24.1" fill="#7a7a7a"/>
<rect x="367.2" y="698.6" width="24.1" height="24.1" fill="#7c7c7c"/>
<rect x="390.9" y="698.6" width="24.1" height="24.1" fill="#7e7e7e"/>
<rect x="414.7" y="698.6" width="24.1" height="24.1" fill="#7f7f7f"/>
<rect x="438.5" y="698.6" width="24.1" height="24.1" fill="#7e7e7e"/>
<rect x="462.2" y="698.6" width="24.1" height="24.1" fill="#7b7b7b"/>
<rect x="486.0" y="698.6" width="24.1" height="24.1" fill="#787878"/>
<rect x="509.8" y="698.6" width="24.1" height="24.1" fill="#767676"/>
<rect x="533.5" y="698.6" width="24.1" height="24.1" fill="#757575"/>
<rect x="557.3" y="698.6" width="24.1" height="24.1" fill="#757575"/>
<rect x="581.0" y="698.6" width="24.1" height="24.1" fill="#757575"/>
<rect x="604.8" y="698.6" width="24.1" height="24.1" fill="#757575"/>
<rect x="628.6" y="698.6" width="24.1" height="24.1" fill="#747474"/>
<rect x="652.3" y="698.6" width="53.8" height="24.1" fill="#747474"/>
<rect x="75.8" y="722.4" width="54.1" height="53.8" fill="#525252"/>
<rect x="129.5" y="722.4" width="24.1" height="53.8" fill="#565656"/>
<rect x="153.3" y="722.4" width="24.1" height="53.8" fill="#5d5d5d"/>
<rect x="177.1" y="722.4" width="24.1" height="53.8" fill="#656565"/>
<rect x="200.8" y="722.4" width="24.1" height="53.8" fill="#6e6e6e"/>
<rect x="224.6" y="722.4" width="24.1" height="53.8" fill="#757575"/>
<rect x="248.3" y="722.4" width="24.1" height="53.8" fill="#7a7a7a"/>
<rect x="272.1" y="722.4" width="24.1" height="53.8" fill="#797979"/>
<rect x="295.9" y="722.4" width="24.1" height="53.8" fill="#727272"/>
<rect x="319.6" y="722.4" width="24.1" height="53.8" fill="#707070"/>
<rect x="343.4" y="722.4" width="24.1" height="53.8" fill="#727272"/>
<rect x="367.2" y="722.4" width="24.1" height="53.8" fill="#737373"/>
<rect x="390.9" y="722.4" width="24.1" height="53.8" fill="#757575"/>
<rect x="414.7" y="722.4" width="24.1" height="53.8" fill="#767676"/>
<rect x="438.5" y="722.4" width="24.1" height="53.8" fill="#767676"/>
<rect x="462.2" y="722.4" width="24.1" height="53.8" fill="#757575"/>
<rect x="486.0" y="722.4" width="24.1" height="53.8" fill="#737373"/>
<rect x="509.8" y="722.4" width="24.1" height="53.8" fill="#727272"/>
<rect x="533.5" y="722.4" width="24.1" height="53.8" fill="#727272"/>
<rect x="557.3" y="722.4" width="24.1" height="53.8" fill="#727272"/>
<rect x="581.0" y="722.4" width="24.1" height="53.8" fill="#727272"/>
<rect x="604.8" y="722.4" width="24.1" height="53.8" fill="#727272"/>
<rect x="628.6" y="722.4" width="24.1" height="53.8" fill="#727272"/>
<rect x="652.3" y="722.4" width="53.8" height="53.8" fill="#727272"/>
</g>

<rect x="100" y="170" width="9.5" height="590" fill="#000"/>
<rect x="109.5" y="170" width="8" height="590" fill="url(#gleft)"/>
<rect x="100" y="741" width="590" height="10" fill="#000"/>
<rect x="100" y="681" width="590" height="60" fill="url(#gbot)"/>
<rect x="100" y="170" width="480" height="24" fill="url(#gtop)"/>
<g filter="url(#fsoft)">
<rect x="638.6" y="262" width="50" height="488" fill="#000" fill-opacity="0.2"/>
<rect x="422" y="290" width="216.6" height="460" fill="#000" fill-opacity="0.06"/>
</g>

</g>
<path d="M530 170 L532.4 176.7 L537.5 195.3 L542.5 212.2 L547.6 225.6 L551 235.8 L571.2 232.4 L588 227.3 L605 220.6 L621.8 213.8 L638.6 206.3 L652.1 208.8 L663.9 225.6 L675.7 240.8 L690 242 L690 170 Z" fill="#fff" filter="url(#fsoft)"/>
</g>
<line x1="105.90" y1="746.14" x2="105.90" y2="753.08" stroke="#000" stroke-width="1.39" stroke-linecap="butt"/>
<text x="105.90" y="768.90" font-size="10.31" textLength="6.19" lengthAdjust="spacingAndGlyphs" text-anchor="middle" fill="#000">0</text>
<line x1="105.76" y1="746.00" x2="98.82" y2="746.00" stroke="#000" stroke-width="1.39" stroke-linecap="butt"/>
<text x="90.60" y="750.50" font-size="10.31" textLength="6.19" lengthAdjust="spacingAndGlyphs" text-anchor="end" fill="#000">0</text>
<line x1="175.52" y1="746.14" x2="175.52" y2="753.08" stroke="#000" stroke-width="1.39" stroke-linecap="butt"/>
<text x="175.52" y="768.90" font-size="10.31" textLength="18.56" lengthAdjust="spacingAndGlyphs" text-anchor="middle" fill="#000">250</text>
<line x1="105.76" y1="676.38" x2="98.82" y2="676.38" stroke="#000" stroke-width="1.39" stroke-linecap="butt"/>
<text x="90.60" y="680.88" font-size="10.31" textLength="18.56" lengthAdjust="spacingAndGlyphs" text-anchor="end" fill="#000">250</text>
<line x1="245.14" y1="746.14" x2="245.14" y2="753.08" stroke="#000" stroke-width="1.39" stroke-linecap="butt"/>
<text x="245.14" y="768.90" font-size="10.31" textLength="18.56" lengthAdjust="spacingAndGlyphs" text-anchor="middle" fill="#000">500</text>
<line x1="105.76" y1="606.76" x2="98.82" y2="606.76" stroke="#000" stroke-width="1.39" stroke-linecap="butt"/>
<text x="90.60" y="611.26" font-size="10.31" textLength="18.56" lengthAdjust="spacingAndGlyphs" text-anchor="end" fill="#000">500</text>
<line x1="314.76" y1="746.14" x2="314.76" y2="753.08" stroke="#000" stroke-width="1.39" stroke-linecap="butt"/>
<text x="314.76" y="768.90" font-size="10.31" textLength="18.56" lengthAdjust="spacingAndGlyphs" text-anchor="middle" fill="#000">750</text>
<line x1="105.76" y1="537.14" x2="98.82" y2="537.14" stroke="#000" stroke-width="1.39" stroke-linecap="butt"/>
<text x="90.60" y="541.64" font-size="10.31" textLength="18.56" lengthAdjust="spacingAndGlyphs" text-anchor="end" fill="#000">750</text>
<line x1="384.39" y1="746.14" x2="384.39" y2="753.08" stroke="#000" stroke-width="1.39" stroke-linecap="butt"/>
<text x="384.39" y="768.90" font-size="10.31" textLength="24.74" lengthAdjust="spacingAndGlyphs" text-anchor="middle" fill="#000">1000</text>
<line x1="105.76" y1="467.51" x2="98.82" y2="467.51" stroke="#000" stroke-width="1.39" stroke-linecap="butt"/>
<text x="90.60" y="472.01" font-size="10.31" textLength="24.74" lengthAdjust="spacingAndGlyphs" text-anchor="end" fill="#000">1000</text>
<line x1="454.01" y1="746.14" x2="454.01" y2="753.08" stroke="#000" stroke-width="1.39" stroke-linecap="butt"/>
<text x="454.01" y="768.90" font-size="10.31" textLength="24.74" lengthAdjust="spacingAndGlyphs" text-anchor="middle" fill="#000">1250</text>
<line x1="105.76" y1="397.89" x2="98.82" y2="397.89" stroke="#000" stroke-width="1.39" stroke-linecap="butt"/>
<text x="90.60" y="402.39" font-size="10.31" textLength="24.74" lengthAdjust="spacingAndGlyphs" text-anchor="end" fill="#000">1250</text>
<line x1="523.63" y1="746.14" x2="523.63" y2="753.08" stroke="#000" stroke-width="1.39" stroke-linecap="butt"/>
<text x="523.63" y="768.90" font-size="10.31" textLength="24.74" lengthAdjust="spacingAndGlyphs" text-anchor="middle" fill="#000">1500</text>
<line x1="105.76" y1="328.27" x2="98.82" y2="328.27" stroke="#000" stroke-width="1.39" stroke-linecap="butt"/>
<text x="90.60" y="332.77" font-size="10.31" textLength="24.74" lengthAdjust="spacingAndGlyphs" text-anchor="end" fill="#000">1500</text>
<line x1="593.25" y1="746.14" x2="593.25" y2="753.08" stroke="#000" stroke-width="1.39" stroke-linecap="butt"/>
<text x="593.25" y="768.90" font-size="10.31" textLength="24.74" lengthAdjust="spacingAndGlyphs" text-anchor="middle" fill="#000">1750</text>
<line x1="105.76" y1="258.65" x2="98.82" y2="258.65" stroke="#000" stroke-width="1.39" stroke-linecap="butt"/>
<text x="90.60" y="263.15" font-size="10.31" textLength="24.74" lengthAdjust="spacingAndGlyphs" text-anchor="end" fill="#000">1750</text>
<line x1="662.87" y1="746.14" x2="662.87" y2="753.08" stroke="#000" stroke-width="1.39" stroke-linecap="butt"/>
<text x="662.87" y="768.90" font-size="10.31" textLength="24.74" lengthAdjust="spacingAndGlyphs" text-anchor="middle" fill="#000">2000</text>
<line x1="105.76" y1="189.03" x2="98.82" y2="189.03" stroke="#000" stroke-width="1.39" stroke-linecap="butt"/>
<text x="90.60" y="193.53" font-size="10.31" textLength="24.74" lengthAdjust="spacingAndGlyphs" text-anchor="end" fill="#000">2000</text>
<text x="391.00" y="786.80" font-size="11.04" textLength="7.14" lengthAdjust="spacingAndGlyphs" text-anchor="middle" fill="#000">X</text>
<text x="52.60" y="461.00" font-size="11.04" textLength="6.36" lengthAdjust="spacingAndGlyphs" text-anchor="middle" fill="#000" transform="rotate(-90 52.60 461.00)">Y</text>
<line x1="391.50" y1="170.10" x2="391.50" y2="752.80" stroke="#0000ff" stroke-width="1.0" stroke-linecap="butt"/>
<line x1="100.00" y1="461.50" x2="682.90" y2="461.50" stroke="#0000ff" stroke-width="1.0" stroke-linecap="butt"/>
<rect x="105.76" y="175.80" width="570.34" height="570.34" fill="none" stroke="#000" stroke-width="1.39"/>
<rect x="711.4" y="112.4" width="35.80" height="697.50" fill="url(#hotgrad)"/>
<rect x="711.40" y="112.40" width="35.80" height="697.50" fill="none" stroke="#000" stroke-width="1.39"/>
<line x1="747.20" y1="792.00" x2="754.14" y2="792.00" stroke="#000" stroke-width="1.39" stroke-linecap="butt"/>
<text x="762.00" y="795.60" font-size="10.31" textLength="12.37" lengthAdjust="spacingAndGlyphs" text-anchor="start" fill="#000">25</text>
<line x1="747.20" y1="645.70" x2="754.14" y2="645.70" stroke="#000" stroke-width="1.39" stroke-linecap="butt"/>
<text x="762.00" y="649.30" font-size="10.31" textLength="12.37" lengthAdjust="spacingAndGlyphs" text-anchor="start" fill="#000">30</text>
<line x1="747.20" y1="499.40" x2="754.14" y2="499.40" stroke="#000" stroke-width="1.39" stroke-linecap="butt"/>
<text x="762.00" y="503.00" font-size="10.31" textLength="12.37" lengthAdjust="spacingAndGlyphs" text-anchor="start" fill="#000">35</text>
<line x1="747.20" y1="353.10" x2="754.14" y2="353.10" stroke="#000" stroke-width="1.39" stroke-linecap="butt"/>
<text x="762.00" y="356.70" font-size="10.31" textLength="12.37" lengthAdjust="spacingAndGlyphs" text-anchor="start" fill="#000">40</text>
<line x1="747.20" y1="206.80" x2="754.14" y2="206.80" stroke="#000" stroke-width="1.39" stroke-linecap="butt"/>
<text x="762.00" y="210.40" font-size="10.31" textLength="12.37" lengthAdjust="spacingAndGlyphs" text-anchor="start" fill="#000">45</text>
<line x1="910.90" y1="233.00" x2="903.96" y2="233.00" stroke="#000" stroke-width="1.39" stroke-linecap="butt"/>
<text x="895.80" y="236.60" font-size="10.31" textLength="6.19" lengthAdjust="spacingAndGlyphs" text-anchor="end" fill="#000">0</text>
<line x1="910.90" y1="197.00" x2="903.96" y2="197.00" stroke="#000" stroke-width="1.39" stroke-linecap="butt"/>
<text x="895.80" y="200.60" font-size="10.31" textLength="6.19" lengthAdjust="spacingAndGlyphs" text-anchor="end" fill="#000">2</text>
<line x1="910.90" y1="161.00" x2="903.96" y2="161.00" stroke="#000" stroke-width="1.39" stroke-linecap="butt"/>
<text x="895.80" y="164.60" font-size="10.31" textLength="6.19" lengthAdjust="spacingAndGlyphs" text-anchor="end" fill="#000">4</text>
<line x1="910.90" y1="125.00" x2="903.96" y2="125.00" stroke="#000" stroke-width="1.39" stroke-linecap="butt"/>
<text x="895.80" y="128.60" font-size="10.31" textLength="6.19" lengthAdjust="spacingAndGlyphs" text-anchor="end" fill="#000">6</text>
<line x1="940.00" y1="233.00" x2="940.00" y2="239.94" stroke="#000" stroke-width="1.39" stroke-linecap="butt"/>
<text x="940.00" y="255.70" font-size="10.31" textLength="28.25" lengthAdjust="spacingAndGlyphs" text-anchor="middle" fill="#000">-4000</text>
<line x1="994.50" y1="233.00" x2="994.50" y2="239.94" stroke="#000" stroke-width="1.39" stroke-linecap="butt"/>
<line x1="1049.00" y1="233.00" x2="1049.00" y2="239.94" stroke="#000" stroke-width="1.39" stroke-linecap="butt"/>
<text x="1049.00" y="255.70" font-size="10.31" textLength="6.19" lengthAdjust="spacingAndGlyphs" text-anchor="middle" fill="#000">0</text>
<line x1="1103.50" y1="233.00" x2="1103.50" y2="239.94" stroke="#000" stroke-width="1.39" stroke-linecap="butt"/>
<line x1="1158.00" y1="233.00" x2="1158.00" y2="239.94" stroke="#000" stroke-width="1.39" stroke-linecap="butt"/>
<text x="1158.00" y="255.70" font-size="10.31" textLength="24.74" lengthAdjust="spacingAndGlyphs" text-anchor="middle" fill="#000">4000</text>
<text x="1047.70" y="274.00" font-size="11.04" textLength="34.82" lengthAdjust="spacingAndGlyphs" text-anchor="middle" fill="#000">counts</text>
<text x="878.30" y="174.00" font-size="11.04" textLength="71.44" lengthAdjust="spacingAndGlyphs" text-anchor="middle" fill="#000" transform="rotate(-90 878.30 174.00)">log frequency</text>
<text x="1193.60" y="174.70" font-size="11.04" textLength="93.52" lengthAdjust="spacingAndGlyphs" text-anchor="middle" fill="#000" transform="rotate(90 1193.60 174.70)">histogram (detail)</text>
<path d="M910.90 233.00 L1024.75 233.00 L1024.75 216.87 L1030.70 216.87 L1030.70 206.09 L1036.82 206.09 L1036.82 202.71 L1041.65 202.71 L1041.65 119.16 L1052.88 119.16 L1052.88 157.80 L1058.83 157.80 L1058.83 165.04 L1064.14 165.04 L1064.14 175.02 L1069.78 175.02 L1069.78 185.97 L1075.73 185.97 L1075.73 188.70 L1081.05 188.70 L1081.05 194.82 L1087.00 194.82 L1087.00 199.97 L1092.31 199.97 L1092.31 202.06 L1097.95 202.06 L1097.95 206.09 L1109.22 206.09 L1109.22 208.02 L1114.85 208.02 L1114.85 204.80 L1120.00 204.80 L1120.00 210.92 L1126.12 210.92 L1126.12 208.82 L1131.75 208.82 L1131.75 206.89 L1137.38 206.89 L1137.38 207.70 L1143.02 207.70 L1143.02 209.95 L1148.17 209.95 L1148.17 207.70 L1153.96 207.70 L1153.96 209.95 L1171.19 209.95 L1171.19 215.74 L1176.50 215.74 L1176.50 210.92 L1181.97 210.92 L1181.97 170.67 L1185.30 170.67" fill="none" stroke="#0000ff" stroke-width="1.39" stroke-linejoin="miter"/>
<rect x="910.90" y="112.80" width="274.40" height="120.20" fill="none" stroke="#000" stroke-width="1.39"/>
<line x1="910.90" y1="404.75" x2="903.96" y2="404.75" stroke="#000" stroke-width="1.39" stroke-linecap="butt"/>
<text x="895.80" y="408.35" font-size="10.31" textLength="6.19" lengthAdjust="spacingAndGlyphs" text-anchor="end" fill="#000">0</text>
<line x1="910.90" y1="370.40" x2="903.96" y2="370.40" stroke="#000" stroke-width="1.39" stroke-linecap="butt"/>
<text x="895.80" y="374.00" font-size="10.31" textLength="6.19" lengthAdjust="spacingAndGlyphs" text-anchor="end" fill="#000">2</text>
<line x1="910.90" y1="336.05" x2="903.96" y2="336.05" stroke="#000" stroke-width="1.39" stroke-linecap="butt"/>
<text x="895.80" y="339.65" font-size="10.31" textLength="6.19" lengthAdjust="spacingAndGlyphs" text-anchor="end" fill="#000">4</text>
<line x1="910.90" y1="301.70" x2="903.96" y2="301.70" stroke="#000" stroke-width="1.39" stroke-linecap="butt"/>
<text x="895.80" y="305.30" font-size="10.31" textLength="6.19" lengthAdjust="spacingAndGlyphs" text-anchor="end" fill="#000">6</text>
<line x1="929.00" y1="404.75" x2="929.00" y2="411.69" stroke="#000" stroke-width="1.39" stroke-linecap="butt"/>
<text x="929.00" y="427.60" font-size="10.31" textLength="6.19" lengthAdjust="spacingAndGlyphs" text-anchor="middle" fill="#000">0</text>
<line x1="966.28" y1="404.75" x2="966.28" y2="411.69" stroke="#000" stroke-width="1.39" stroke-linecap="butt"/>
<line x1="1003.56" y1="404.75" x2="1003.56" y2="411.69" stroke="#000" stroke-width="1.39" stroke-linecap="butt"/>
<text x="1003.56" y="427.60" font-size="10.31" textLength="30.93" lengthAdjust="spacingAndGlyphs" text-anchor="middle" fill="#000">20000</text>
<line x1="1040.84" y1="404.75" x2="1040.84" y2="411.69" stroke="#000" stroke-width="1.39" stroke-linecap="butt"/>
<line x1="1078.12" y1="404.75" x2="1078.12" y2="411.69" stroke="#000" stroke-width="1.39" stroke-linecap="butt"/>
<text x="1078.12" y="427.60" font-size="10.31" textLength="30.93" lengthAdjust="spacingAndGlyphs" text-anchor="middle" fill="#000">40000</text>
<line x1="1115.40" y1="404.75" x2="1115.40" y2="411.69" stroke="#000" stroke-width="1.39" stroke-linecap="butt"/>
<line x1="1152.68" y1="404.75" x2="1152.68" y2="411.69" stroke="#000" stroke-width="1.39" stroke-linecap="butt"/>
<text x="1152.68" y="427.60" font-size="10.31" textLength="30.93" lengthAdjust="spacingAndGlyphs" text-anchor="middle" fill="#000">60000</text>
<text x="1047.70" y="445.50" font-size="11.04" textLength="34.82" lengthAdjust="spacingAndGlyphs" text-anchor="middle" fill="#000">counts</text>
<text x="878.30" y="345.80" font-size="11.04" textLength="71.44" lengthAdjust="spacingAndGlyphs" text-anchor="middle" fill="#000" transform="rotate(-90 878.30 345.80)">log frequency</text>
<text x="1193.60" y="346.50" font-size="11.04" textLength="80.30" lengthAdjust="spacingAndGlyphs" text-anchor="middle" fill="#000" transform="rotate(90 1193.60 346.50)">histogram (full)</text>
<path d="M910.90 404.75 L912.88 404.75 L918.99 404.75 L918.99 383.82 L924.95 383.82 L924.95 290.95 L930.26 290.95 L930.26 355.65 L936.22 355.65 L936.22 366.92 L941.05 366.92 L941.05 369.82 L947.48 369.82 L947.48 370.95 L953.12 370.95 L953.12 372.88 L964.39 372.88 L964.39 373.84 L974.85 373.84 L974.85 372.88 L986.12 372.88 L986.12 376.10 L991.75 376.10 L991.75 377.87 L996.58 377.87 L996.58 380.12 L1003.02 380.12 L1003.02 381.09 L1009.13 381.09 L1009.13 385.11 L1013.96 385.11 L1013.96 382.54 L1019.92 382.54 L1019.92 381.73 L1025.23 381.73 L1025.23 385.75 L1031.19 385.75 L1031.19 387.85 L1036.82 387.85 L1036.82 386.72 L1041.65 386.72 L1041.65 383.82 L1047.28 383.82 L1047.28 384.95 L1052.92 384.95 L1052.92 385.92 L1042.41 385.92 L1042.41 383.82 L1048.05 383.82 L1048.05 384.95 L1053.68 384.95 L1053.68 385.75 L1064.14 385.75 L1064.14 386.72 L1075.73 386.72 L1075.73 391.87 L1081.05 391.87 L1081.05 386.56 L1086.68 386.56 L1086.68 387.53 L1091.83 387.53 L1091.83 397.02 L1104.06 397.02 L1104.06 386.56 L1114.85 386.56 L1114.85 385.75 L1120.00 385.75 L1120.00 391.87 L1126.12 391.87 L1126.12 389.94 L1136.58 389.94 L1136.58 388.97 L1143.02 388.97 L1143.02 385.75 L1153.96 385.75 L1153.96 388.97 L1159.11 388.97 L1159.11 393.00 L1164.75 393.00 L1164.75 389.94 L1170.70 389.94 L1170.70 387.85 L1176.02 387.85 L1176.02 389.94 L1181.97 389.94 L1181.97 348.89 L1185.30 348.89" fill="none" stroke="#0000ff" stroke-width="1.39" stroke-linejoin="miter"/>
<rect x="910.90" y="284.80" width="274.40" height="119.95" fill="none" stroke="#000" stroke-width="1.39"/>
<line x1="910.90" y1="527.80" x2="903.96" y2="527.80" stroke="#000" stroke-width="1.39" stroke-linecap="butt"/>
<text x="895.80" y="532.10" font-size="10.31" textLength="24.74" lengthAdjust="spacingAndGlyphs" text-anchor="end" fill="#000">4000</text>
<line x1="910.90" y1="551.85" x2="903.96" y2="551.85" stroke="#000" stroke-width="1.39" stroke-linecap="butt"/>
<text x="895.80" y="556.15" font-size="10.31" textLength="24.74" lengthAdjust="spacingAndGlyphs" text-anchor="end" fill="#000">2000</text>
<line x1="910.90" y1="575.90" x2="903.96" y2="575.90" stroke="#000" stroke-width="1.39" stroke-linecap="butt"/>
<text x="895.80" y="580.20" font-size="10.31" textLength="6.19" lengthAdjust="spacingAndGlyphs" text-anchor="end" fill="#000">0</text>
<line x1="910.90" y1="599.95" x2="903.96" y2="599.95" stroke="#000" stroke-width="1.39" stroke-linecap="butt"/>
<text x="895.80" y="604.25" font-size="10.31" textLength="32.89" lengthAdjust="spacingAndGlyphs" text-anchor="end" fill="#000">−2000</text>
<line x1="910.90" y1="624.00" x2="903.96" y2="624.00" stroke="#000" stroke-width="1.39" stroke-linecap="butt"/>
<text x="895.80" y="628.30" font-size="10.31" textLength="32.89" lengthAdjust="spacingAndGlyphs" text-anchor="end" fill="#000">−4000</text>
<line x1="911.90" y1="636.30" x2="911.90" y2="643.24" stroke="#000" stroke-width="1.39" stroke-linecap="butt"/>
<text x="911.90" y="659.30" font-size="10.31" textLength="6.19" lengthAdjust="spacingAndGlyphs" text-anchor="middle" fill="#000">0</text>
<line x1="978.10" y1="636.30" x2="978.10" y2="643.24" stroke="#000" stroke-width="1.39" stroke-linecap="butt"/>
<text x="978.10" y="659.30" font-size="10.31" textLength="18.56" lengthAdjust="spacingAndGlyphs" text-anchor="middle" fill="#000">500</text>
<line x1="1044.30" y1="636.30" x2="1044.30" y2="643.24" stroke="#000" stroke-width="1.39" stroke-linecap="butt"/>
<text x="1044.30" y="659.30" font-size="10.31" textLength="24.74" lengthAdjust="spacingAndGlyphs" text-anchor="middle" fill="#000">1000</text>
<line x1="1110.50" y1="636.30" x2="1110.50" y2="643.24" stroke="#000" stroke-width="1.39" stroke-linecap="butt"/>
<text x="1110.50" y="659.30" font-size="10.31" textLength="24.74" lengthAdjust="spacingAndGlyphs" text-anchor="middle" fill="#000">1500</text>
<line x1="1176.70" y1="636.30" x2="1176.70" y2="643.24" stroke="#000" stroke-width="1.39" stroke-linecap="butt"/>
<text x="1176.70" y="659.30" font-size="10.31" textLength="24.74" lengthAdjust="spacingAndGlyphs" text-anchor="middle" fill="#000">2000</text>
<text x="1048.20" y="677.80" font-size="11.04" textLength="7.14" lengthAdjust="spacingAndGlyphs" text-anchor="middle" fill="#000">X</text>
<text x="851.30" y="577.55" font-size="11.04" textLength="34.82" lengthAdjust="spacingAndGlyphs" text-anchor="middle" fill="#000" transform="rotate(-90 851.30 577.55)">counts</text>
<path d="M911.60 575.95 L912.10 576.02 L912.60 575.95 L913.10 575.70 L913.60 576.04 L914.10 575.97 L914.60 575.82 L915.10 575.99 L915.60 575.95 L916.10 575.94 L916.60 575.90 L917.10 575.98 L917.60 575.79 L918.10 575.88 L918.60 575.83 L919.10 575.99 L919.60 575.91 L920.10 575.86 L920.60 575.78 L921.10 575.86 L921.60 575.90 L922.10 575.86 L922.60 576.09 L923.10 576.05 L923.60 575.49 L924.10 575.62 L924.60 575.87 L925.10 575.84 L925.60 575.93 L926.10 575.93 L926.60 576.22 L927.10 575.73 L927.60 575.84 L928.10 576.21 L928.60 576.00 L929.10 576.00 L929.60 575.82 L930.10 575.65 L930.60 575.93 L931.10 575.92 L931.60 575.72 L932.10 575.80 L932.60 575.89 L933.10 575.76 L933.60 575.89 L934.10 575.91 L934.60 575.91 L935.10 575.82 L935.60 575.99 L936.10 576.03 L936.60 575.95 L937.10 575.78 L937.60 576.01 L938.10 575.82 L938.60 576.03 L939.10 575.74 L939.60 576.04 L940.10 575.90 L940.60 575.71 L941.10 575.85 L941.60 575.91 L942.10 575.94 L942.60 575.75 L943.10 575.73 L943.60 575.93 L944.10 575.83 L944.60 575.94 L945.10 576.01 L945.60 575.65 L946.10 575.94 L946.60 576.08 L947.10 575.86 L947.60 575.78 L948.10 576.01 L948.60 575.94 L949.10 576.03 L949.60 575.85 L950.10 575.68 L950.60 575.88 L951.10 575.83 L951.60 576.02 L952.10 575.93 L952.60 575.66 L953.10 575.72 L953.60 576.03 L954.10 576.00 L954.60 575.80 L955.10 575.90 L955.60 575.97 L956.10 575.97 L956.60 576.03 L957.10 575.94 L957.60 575.89 L958.10 575.86 L958.60 576.06 L959.10 575.56 L959.60 575.88 L960.10 575.90 L960.60 575.69 L961.10 575.95 L961.60 575.80 L962.10 576.03 L962.60 575.88 L963.10 576.00 L963.60 576.08 L964.10 575.96 L964.60 575.77 L965.10 575.67 L965.60 576.16 L966.10 575.88 L966.60 575.80 L967.10 575.92 L967.60 575.87 L968.10 576.03 L968.60 575.91 L969.10 575.90 L969.60 575.79 L970.10 575.97 L970.60 575.74 L971.10 576.00 L971.60 576.13 L972.10 575.67 L972.60 575.53 L973.10 575.99 L973.60 576.28 L974.10 575.75 L974.60 575.71 L975.10 575.99 L975.60 575.77 L976.10 575.82 L976.60 575.85 L977.10 575.98 L977.60 575.84 L978.10 575.94 L978.60 575.87 L979.10 575.77 L979.60 575.85 L980.10 575.76 L980.60 575.90 L981.10 575.73 L981.60 575.74 L982.10 576.12 L982.60 575.89 L983.10 575.89 L983.60 575.98 L984.10 575.84 L984.60 575.87 L985.10 575.96 L985.60 575.94 L986.10 575.73 L986.60 576.03 L987.10 575.81 L987.60 575.74 L988.10 575.76 L988.60 575.84 L989.10 576.14 L989.60 575.72 L990.10 575.92 L990.60 575.58 L991.10 575.90 L991.60 576.03 L992.10 575.86 L992.60 575.81 L993.10 575.93 L993.60 576.01 L994.10 576.00 L994.60 576.20 L995.10 575.93 L995.60 575.81 L996.10 575.88 L996.60 575.89 L997.10 575.92 L997.60 575.90 L998.10 575.93 L998.60 575.65 L999.10 576.02 L999.60 575.81 L1000.10 575.72 L1000.60 576.00 L1001.10 576.10 L1001.60 575.97 L1002.10 575.92 L1002.60 575.76 L1003.10 576.33 L1003.60 576.03 L1004.10 575.73 L1004.60 575.78 L1005.10 575.91 L1005.60 575.67 L1006.10 575.93 L1006.60 575.83 L1007.10 576.08 L1007.60 576.04 L1008.10 575.49 L1008.60 575.91 L1009.10 575.66 L1009.60 576.07 L1010.10 575.93 L1010.60 575.98 L1011.10 575.74 L1011.60 576.17 L1012.10 576.20 L1012.60 575.74 L1013.10 575.96 L1013.60 575.80 L1014.10 575.90 L1014.60 575.71 L1015.10 576.18 L1015.60 575.75 L1016.10 575.86 L1016.60 575.98 L1017.10 575.80 L1017.60 575.86 L1018.10 575.82 L1018.60 575.88 L1019.10 575.72 L1019.60 575.83 L1020.10 575.87 L1020.60 575.85 L1021.10 575.91 L1021.60 575.86 L1022.10 576.01 L1022.60 575.85 L1023.10 575.88 L1023.60 575.80 L1024.10 575.82 L1024.60 575.71 L1025.10 575.98 L1025.60 575.73 L1026.10 575.79 L1026.60 575.95 L1027.10 575.96 L1027.60 575.84 L1028.10 575.60 L1028.60 575.96 L1029.10 575.94 L1029.60 575.69 L1030.10 576.02 L1030.60 575.79 L1031.10 575.73 L1031.60 575.91 L1032.10 575.87 L1032.60 575.93 L1033.10 575.66 L1033.60 576.17 L1034.10 575.81 L1034.60 575.67 L1035.10 575.99 L1035.60 575.85 L1036.10 575.95 L1036.60 575.85 L1037.10 575.89 L1037.60 575.94 L1038.10 575.79 L1038.60 576.00 L1039.10 575.83 L1039.60 575.77 L1040.10 575.91 L1040.60 575.97 L1041.10 575.87 L1041.60 575.77 L1042.10 575.99 L1042.60 575.64 L1043.10 575.75 L1043.60 575.91 L1044.10 575.70 L1044.60 575.90 L1045.10 575.89 L1045.60 576.03 L1046.10 575.76 L1046.60 575.81 L1047.10 575.95 L1047.60 575.53 L1048.10 576.37 L1048.60 575.80 L1049.10 575.79 L1049.60 576.03 L1050.10 575.89 L1050.60 575.63 L1051.10 575.99 L1051.60 576.03 L1052.10 575.83 L1052.60 575.86 L1053.10 575.97 L1053.60 575.76 L1054.10 575.97 L1054.60 575.93 L1055.10 575.80 L1055.60 575.69 L1056.10 575.87 L1056.60 575.77 L1057.10 576.05 L1057.60 575.92 L1058.10 576.02 L1058.60 575.92 L1059.10 575.94 L1059.60 575.78 L1060.10 576.00 L1060.60 576.17 L1061.10 575.85 L1061.60 575.81 L1062.10 575.88 L1062.60 575.83 L1063.10 575.79 L1063.60 575.92 L1064.10 575.86 L1064.60 576.12 L1065.10 575.90 L1065.60 575.95 L1066.10 576.04 L1066.60 575.85 L1067.10 576.12 L1067.60 575.81 L1068.10 575.78 L1068.60 575.85 L1069.10 575.88 L1069.60 575.69 L1070.10 575.89 L1070.60 575.65 L1071.10 576.11 L1071.60 575.89 L1072.10 575.80 L1072.60 575.76 L1073.10 575.84 L1073.60 575.87 L1074.10 575.74 L1074.60 575.76 L1075.10 575.87 L1075.60 575.82 L1076.10 576.04 L1076.60 576.07 L1077.10 575.90 L1077.60 575.97 L1078.10 575.70 L1078.60 576.00 L1079.10 575.90 L1079.60 575.97 L1080.10 576.14 L1080.60 575.56 L1081.10 575.94 L1081.60 575.74 L1082.10 575.99 L1082.60 575.70 L1083.10 575.83 L1083.60 575.93 L1084.10 575.99 L1084.60 575.91 L1085.10 575.78 L1085.60 575.82 L1086.10 576.03 L1086.60 575.90 L1087.10 575.65 L1087.60 576.03 L1088.10 575.96 L1088.60 576.03 L1089.10 575.85 L1089.60 576.02 L1090.10 575.74 L1090.60 575.99 L1091.10 575.83 L1091.60 576.00 L1092.10 576.05 L1092.60 575.79 L1093.10 575.89 L1093.60 575.91 L1094.10 576.08 L1094.60 576.01 L1095.10 575.72 L1095.60 575.97 L1096.10 576.01 L1096.60 576.22 L1097.10 575.65 L1097.60 575.82 L1098.10 576.10 L1098.60 575.70 L1099.10 575.72 L1099.60 575.98 L1100.10 576.05 L1100.60 575.80 L1101.10 575.98 L1101.60 575.92 L1102.10 576.13 L1102.60 575.90 L1103.10 576.05 L1103.60 575.76 L1104.10 575.87 L1104.60 575.89 L1105.10 576.07 L1105.60 575.99 L1106.10 575.79 L1106.60 576.00 L1107.10 576.02 L1107.60 575.88 L1108.10 575.86 L1108.60 575.87 L1109.10 575.65 L1109.60 575.93 L1110.10 575.94 L1110.60 575.77 L1111.10 576.01 L1111.60 575.69 L1112.10 575.82 L1112.60 575.83 L1113.10 576.20 L1113.60 575.66 L1114.10 575.98 L1114.60 576.04 L1115.10 575.96 L1115.60 576.08 L1116.10 575.75 L1116.60 575.56 L1117.10 576.02 L1117.60 575.72 L1118.10 575.85 L1118.60 575.72 L1119.10 576.06 L1119.60 576.03 L1120.10 575.79 L1120.60 576.04 L1121.10 575.92 L1121.60 575.88 L1122.10 575.91 L1122.60 575.87 L1123.10 575.99 L1123.60 575.95 L1124.10 575.85 L1124.60 576.05 L1125.10 575.81 L1125.60 575.94 L1126.10 575.96 L1126.60 576.12 L1127.10 575.82 L1127.60 576.16 L1128.10 575.93 L1128.60 575.87 L1129.10 575.80 L1129.60 575.99 L1130.10 575.91 L1130.60 575.73 L1131.10 575.73 L1131.60 575.82 L1132.10 575.80 L1132.60 576.06 L1133.10 576.11 L1133.60 576.03 L1134.10 575.95 L1134.60 575.84 L1135.10 575.91 L1135.60 576.03 L1136.10 576.22 L1136.60 576.04 L1137.10 575.86 L1137.60 575.91 L1138.10 575.83 L1138.60 575.78 L1139.10 575.87 L1139.60 575.93 L1140.10 576.18 L1140.60 575.91 L1141.10 576.10 L1141.60 576.17 L1142.10 575.91 L1142.60 576.14 L1143.10 576.01 L1143.60 575.84 L1144.10 575.94 L1144.60 575.90 L1145.10 575.87 L1145.60 575.87 L1146.10 575.92 L1146.60 575.97 L1147.10 575.77 L1147.60 575.90 L1148.10 575.67 L1148.60 575.94 L1149.10 575.99 L1149.60 575.92 L1150.10 575.94 L1150.60 575.99 L1151.10 575.80 L1151.60 575.86 L1152.10 575.98 L1152.60 576.05 L1153.10 575.96 L1153.60 576.28 L1154.10 575.89 L1154.60 576.05 L1155.10 576.09 L1155.60 575.88 L1156.10 575.78 L1156.60 575.72 L1157.10 575.92 L1157.60 576.07 L1158.10 575.94 L1158.60 575.93 L1159.10 575.84 L1159.60 575.98 L1160.10 575.58 L1160.60 575.93 L1161.10 575.90 L1161.60 575.69 L1162.10 576.23 L1162.60 575.69 L1163.10 575.74 L1163.60 575.72 L1164.10 576.07 L1164.60 575.77 L1165.10 576.00 L1165.60 575.99 L1166.10 575.94 L1166.60 575.70 L1167.10 575.81 L1167.60 576.15 L1168.10 575.71 L1168.60 575.78 L1169.10 575.88 L1169.60 576.02 L1170.10 575.94 L1170.60 576.01 L1171.10 575.74 L1171.60 576.04 L1172.10 575.99 L1172.60 575.66 L1173.10 576.13 L1173.60 576.24 L1174.10 575.78 L1174.60 575.91 L1175.10 576.11 L1175.60 575.68 L1176.10 575.60 L1176.60 575.71 L1177.10 575.81 L1177.60 575.81 L1178.10 575.99 L1178.60 575.94 L1179.10 575.71 L1179.60 575.99 L1180.10 576.18 L1180.60 576.08 L1181.10 576.05 L1181.60 575.90 L1182.10 576.05 L1182.60 575.76 L1183.10 576.01 L1183.60 575.89 L1184.10 576.07" fill="none" stroke="#0000ff" stroke-width="1.9" stroke-linejoin="miter"/>
<line x1="1095.90" y1="575.90" x2="1095.90" y2="570.40" stroke="#0000ff" stroke-width="2.0" stroke-linecap="butt"/>
<line x1="1053.50" y1="575.90" x2="1053.50" y2="574.00" stroke="#0000ff" stroke-width="2.0" stroke-linecap="butt"/>
<line x1="1078.00" y1="575.90" x2="1078.00" y2="574.50" stroke="#0000ff" stroke-width="2.0" stroke-linecap="butt"/>
<line x1="1111.70" y1="575.90" x2="1111.70" y2="574.00" stroke="#0000ff" stroke-width="2.0" stroke-linecap="butt"/>
<line x1="1136.00" y1="575.90" x2="1136.00" y2="573.60" stroke="#0000ff" stroke-width="2.0" stroke-linecap="butt"/>
<line x1="910.90" y1="699.90" x2="903.96" y2="699.90" stroke="#000" stroke-width="1.39" stroke-linecap="butt"/>
<text x="895.80" y="704.20" font-size="10.31" textLength="24.74" lengthAdjust="spacingAndGlyphs" text-anchor="end" fill="#000">4000</text>
<line x1="910.90" y1="723.95" x2="903.96" y2="723.95" stroke="#000" stroke-width="1.39" stroke-linecap="butt"/>
<text x="895.80" y="728.25" font-size="10.31" textLength="24.74" lengthAdjust="spacingAndGlyphs" text-anchor="end" fill="#000">2000</text>
<line x1="910.90" y1="748.00" x2="903.96" y2="748.00" stroke="#000" stroke-width="1.39" stroke-linecap="butt"/>
<text x="895.80" y="752.30" font-size="10.31" textLength="6.19" lengthAdjust="spacingAndGlyphs" text-anchor="end" fill="#000">0</text>
<line x1="910.90" y1="772.05" x2="903.96" y2="772.05" stroke="#000" stroke-width="1.39" stroke-linecap="butt"/>
<text x="895.80" y="776.35" font-size="10.31" textLength="32.89" lengthAdjust="spacingAndGlyphs" text-anchor="end" fill="#000">−2000</text>
<line x1="910.90" y1="796.10" x2="903.96" y2="796.10" stroke="#000" stroke-width="1.39" stroke-linecap="butt"/>
<text x="895.80" y="800.40" font-size="10.31" textLength="32.89" lengthAdjust="spacingAndGlyphs" text-anchor="end" fill="#000">−4000</text>
<line x1="911.90" y1="809.00" x2="911.90" y2="815.94" stroke="#000" stroke-width="1.39" stroke-linecap="butt"/>
<text x="911.90" y="832.00" font-size="10.31" textLength="6.19" lengthAdjust="spacingAndGlyphs" text-anchor="middle" fill="#000">0</text>
<line x1="978.10" y1="809.00" x2="978.10" y2="815.94" stroke="#000" stroke-width="1.39" stroke-linecap="butt"/>
<text x="978.10" y="832.00" font-size="10.31" textLength="18.56" lengthAdjust="spacingAndGlyphs" text-anchor="middle" fill="#000">500</text>
<line x1="1044.30" y1="809.00" x2="1044.30" y2="815.94" stroke="#000" stroke-width="1.39" stroke-linecap="butt"/>
<text x="1044.30" y="832.00" font-size="10.31" textLength="24.74" lengthAdjust="spacingAndGlyphs" text-anchor="middle" fill="#000">1000</text>
<line x1="1110.50" y1="809.00" x2="1110.50" y2="815.94" stroke="#000" stroke-width="1.39" stroke-linecap="butt"/>
<text x="1110.50" y="832.00" font-size="10.31" textLength="24.74" lengthAdjust="spacingAndGlyphs" text-anchor="middle" fill="#000">1500</text>
<line x1="1176.70" y1="809.00" x2="1176.70" y2="815.94" stroke="#000" stroke-width="1.39" stroke-linecap="butt"/>
<text x="1176.70" y="832.00" font-size="10.31" textLength="24.74" lengthAdjust="spacingAndGlyphs" text-anchor="middle" fill="#000">2000</text>
<text x="1048.20" y="850.50" font-size="11.04" textLength="6.36" lengthAdjust="spacingAndGlyphs" text-anchor="middle" fill="#000">Y</text>
<text x="851.30" y="749.90" font-size="11.04" textLength="34.82" lengthAdjust="spacingAndGlyphs" text-anchor="middle" fill="#000" transform="rotate(-90 851.30 749.90)">counts</text>
<path d="M911.60 748.03 L912.10 747.92 L912.60 747.94 L913.10 747.63 L913.60 748.27 L914.10 748.17 L914.60 747.95 L915.10 748.12 L915.60 748.04 L916.10 747.92 L916.60 748.15 L917.10 747.95 L917.60 747.95 L918.10 747.88 L918.60 748.07 L919.10 747.99 L919.60 748.08 L920.10 747.91 L920.60 748.02 L921.10 747.87 L921.60 748.13 L922.10 748.03 L922.60 748.05 L923.10 748.06 L923.60 747.85 L924.10 748.12 L924.60 748.31 L925.10 747.75 L925.60 747.74 L926.10 747.77 L926.60 748.13 L927.10 748.02 L927.60 748.16 L928.10 748.11 L928.60 748.03 L929.10 748.04 L929.60 747.97 L930.10 748.13 L930.60 747.83 L931.10 747.94 L931.60 748.04 L932.10 748.27 L932.60 747.89 L933.10 747.84 L933.60 747.92 L934.10 748.15 L934.60 747.96 L935.10 748.20 L935.60 747.72 L936.10 748.17 L936.60 748.16 L937.10 747.79 L937.60 748.02 L938.10 748.18 L938.60 748.01 L939.10 748.15 L939.60 748.36 L940.10 748.04 L940.60 747.96 L941.10 747.88 L941.60 748.10 L942.10 747.97 L942.60 747.97 L943.10 747.98 L943.60 748.10 L944.10 747.84 L944.60 747.77 L945.10 747.63 L945.60 748.18 L946.10 748.01 L946.60 748.23 L947.10 748.00 L947.60 747.89 L948.10 748.07 L948.60 747.99 L949.10 747.81 L949.60 747.87 L950.10 748.27 L950.60 748.05 L951.10 748.06 L951.60 747.96 L952.10 747.90 L952.60 748.13 L953.10 747.98 L953.60 747.89 L954.10 747.98 L954.60 747.86 L955.10 748.03 L955.60 748.17 L956.10 747.87 L956.60 748.21 L957.10 747.90 L957.60 748.02 L958.10 747.87 L958.60 747.97 L959.10 748.01 L959.60 747.93 L960.10 747.89 L960.60 747.90 L961.10 747.88 L961.60 747.76 L962.10 747.96 L962.60 748.06 L963.10 748.14 L963.60 748.10 L964.10 748.37 L964.60 748.05 L965.10 747.93 L965.60 748.28 L966.10 747.84 L966.60 748.15 L967.10 747.86 L967.60 748.05 L968.10 747.70 L968.60 748.13 L969.10 747.98 L969.60 747.85 L970.10 748.25 L970.60 748.11 L971.10 748.01 L971.60 747.89 L972.10 747.99 L972.60 747.98 L973.10 748.11 L973.60 748.12 L974.10 747.90 L974.60 747.92 L975.10 747.92 L975.60 747.80 L976.10 747.91 L976.60 747.99 L977.10 748.10 L977.60 748.20 L978.10 747.88 L978.60 748.08 L979.10 747.93 L979.60 748.31 L980.10 747.99 L980.60 748.08 L981.10 747.86 L981.60 747.88 L982.10 748.03 L982.60 747.94 L983.10 748.05 L983.60 747.77 L984.10 748.10 L984.60 747.87 L985.10 748.26 L985.60 747.96 L986.10 748.16 L986.60 747.79 L987.10 748.06 L987.60 747.87 L988.10 747.93 L988.60 748.00 L989.10 747.95 L989.60 748.04 L990.10 748.11 L990.60 748.10 L991.10 747.99 L991.60 747.80 L992.10 747.88 L992.60 747.97 L993.10 747.68 L993.60 748.11 L994.10 747.96 L994.60 747.96 L995.10 748.14 L995.60 748.10 L996.10 748.03 L996.60 747.85 L997.10 748.05 L997.60 748.05 L998.10 747.87 L998.60 748.16 L999.10 748.08 L999.60 747.70 L1000.10 748.02 L1000.60 747.81 L1001.10 748.17 L1001.60 748.12 L1002.10 747.83 L1002.60 747.87 L1003.10 748.02 L1003.60 747.96 L1004.10 748.23 L1004.60 748.11 L1005.10 747.96 L1005.60 748.09 L1006.10 747.70 L1006.60 748.05 L1007.10 748.13 L1007.60 747.97 L1008.10 747.89 L1008.60 748.08 L1009.10 748.29 L1009.60 748.03 L1010.10 747.83 L1010.60 748.22 L1011.10 747.72 L1011.60 748.08 L1012.10 747.91 L1012.60 748.14 L1013.10 747.87 L1013.60 748.20 L1014.10 748.05 L1014.60 747.74 L1015.10 747.70 L1015.60 747.95 L1016.10 748.19 L1016.60 748.02 L1017.10 748.01 L1017.60 747.96 L1018.10 748.11 L1018.60 748.06 L1019.10 748.04 L1019.60 747.85 L1020.10 748.18 L1020.60 748.20 L1021.10 747.80 L1021.60 748.35 L1022.10 748.11 L1022.60 747.93 L1023.10 747.71 L1023.60 748.10 L1024.10 748.08 L1024.60 747.91 L1025.10 747.73 L1025.60 748.17 L1026.10 747.91 L1026.60 747.93 L1027.10 748.43 L1027.60 748.32 L1028.10 748.14 L1028.60 747.93 L1029.10 748.10 L1029.60 747.66 L1030.10 748.02 L1030.60 747.89 L1031.10 747.81 L1031.60 747.76 L1032.10 748.08 L1032.60 748.01 L1033.10 748.02 L1033.60 748.13 L1034.10 747.87 L1034.60 747.81 L1035.10 747.73 L1035.60 747.95 L1036.10 748.11 L1036.60 747.98 L1037.10 748.10 L1037.60 747.82 L1038.10 747.93 L1038.60 747.89 L1039.10 747.81 L1039.60 748.28 L1040.10 748.13 L1040.60 747.89 L1041.10 747.89 L1041.60 747.99 L1042.10 747.78 L1042.60 748.07 L1043.10 747.81 L1043.60 747.94 L1044.10 747.85 L1044.60 747.93 L1045.10 747.80 L1045.60 747.76 L1046.10 747.86 L1046.60 747.90 L1047.10 747.96 L1047.60 748.01 L1048.10 748.23 L1048.60 748.12 L1049.10 747.96 L1049.60 748.11 L1050.10 747.90 L1050.60 748.22 L1051.10 748.08 L1051.60 747.80 L1052.10 748.11 L1052.60 748.12 L1053.10 747.60 L1053.60 747.89 L1054.10 747.93 L1054.60 747.71 L1055.10 747.84 L1055.60 747.86 L1056.10 748.08 L1056.60 748.05 L1057.10 748.39 L1057.60 747.94 L1058.10 748.17 L1058.60 748.01 L1059.10 748.04 L1059.60 747.83 L1060.10 747.71 L1060.60 747.88 L1061.10 748.11 L1061.60 748.24 L1062.10 748.09 L1062.60 748.07 L1063.10 747.87 L1063.60 748.23 L1064.10 748.20 L1064.60 747.92 L1065.10 747.99 L1065.60 747.85 L1066.10 748.22 L1066.60 748.06 L1067.10 747.99 L1067.60 748.06 L1068.10 748.07 L1068.60 747.94 L1069.10 747.81 L1069.60 747.81 L1070.10 747.74 L1070.60 748.07 L1071.10 748.33 L1071.60 747.75 L1072.10 748.02 L1072.60 748.06 L1073.10 747.85 L1073.60 748.03 L1074.10 747.84 L1074.60 748.18 L1075.10 747.91 L1075.60 748.02 L1076.10 748.10 L1076.60 747.94 L1077.10 747.73 L1077.60 747.92 L1078.10 748.11 L1078.60 747.99 L1079.10 748.03 L1079.60 747.84 L1080.10 748.02 L1080.60 748.11 L1081.10 748.01 L1081.60 748.29 L1082.10 747.97 L1082.60 747.84 L1083.10 747.76 L1083.60 748.17 L1084.10 747.99 L1084.60 748.15 L1085.10 748.07 L1085.60 748.24 L1086.10 748.19 L1086.60 747.94 L1087.10 748.04 L1087.60 748.16 L1088.10 747.81 L1088.60 748.22 L1089.10 748.18 L1089.60 748.15 L1090.10 747.97 L1090.60 748.05 L1091.10 747.83 L1091.60 748.01 L1092.10 747.91 L1092.60 748.01 L1093.10 747.93 L1093.60 748.04 L1094.10 748.18 L1094.60 747.80 L1095.10 748.14 L1095.60 747.70 L1096.10 747.68 L1096.60 747.98 L1097.10 748.00 L1097.60 748.07 L1098.10 747.75 L1098.60 747.99 L1099.10 748.02 L1099.60 748.19 L1100.10 747.98 L1100.60 748.08 L1101.10 747.85 L1101.60 747.97 L1102.10 747.93 L1102.60 748.11 L1103.10 747.85 L1103.60 747.87 L1104.10 748.09 L1104.60 748.27 L1105.10 748.06 L1105.60 748.05 L1106.10 747.95 L1106.60 748.16 L1107.10 748.08 L1107.60 748.26 L1108.10 748.05 L1108.60 747.86 L1109.10 747.91 L1109.60 747.85 L1110.10 747.81 L1110.60 748.19 L1111.10 748.12 L1111.60 747.81 L1112.10 748.27 L1112.60 748.04 L1113.10 747.86 L1113.60 748.06 L1114.10 747.99 L1114.60 747.88 L1115.10 747.71 L1115.60 748.01 L1116.10 748.04 L1116.60 747.61 L1117.10 748.08 L1117.60 748.09 L1118.10 747.93 L1118.60 748.02 L1119.10 747.96 L1119.60 747.87 L1120.10 747.95 L1120.60 748.20 L1121.10 747.78 L1121.60 748.04 L1122.10 748.03 L1122.60 747.89 L1123.10 747.93 L1123.60 747.79 L1124.10 747.87 L1124.60 748.00 L1125.10 748.05 L1125.60 747.87 L1126.10 748.46 L1126.60 747.91 L1127.10 748.02 L1127.60 747.97 L1128.10 747.94 L1128.60 748.20 L1129.10 747.93 L1129.60 748.20 L1130.10 748.17 L1130.60 747.84 L1131.10 748.16 L1131.60 747.90 L1132.10 748.41 L1132.60 747.94 L1133.10 747.86 L1133.60 747.71 L1134.10 747.81 L1134.60 747.91 L1135.10 747.85 L1135.60 747.82 L1136.10 747.90 L1136.60 747.97 L1137.10 748.22 L1137.60 747.74 L1138.10 747.92 L1138.60 747.86 L1139.10 747.77 L1139.60 747.81 L1140.10 747.86 L1140.60 748.11 L1141.10 747.97 L1141.60 747.92 L1142.10 748.09 L1142.60 748.04 L1143.10 747.97 L1143.60 748.06 L1144.10 747.88 L1144.60 748.09 L1145.10 748.07 L1145.60 747.94 L1146.10 747.82 L1146.60 748.23 L1147.10 748.01 L1147.60 748.46 L1148.10 747.90 L1148.60 748.13 L1149.10 747.93 L1149.60 748.04 L1150.10 748.13 L1150.60 747.88 L1151.10 747.98 L1151.60 748.02 L1152.10 748.02 L1152.60 748.09 L1153.10 748.15 L1153.60 748.13 L1154.10 748.04 L1154.60 747.95 L1155.10 747.83 L1155.60 747.89 L1156.10 747.92 L1156.60 748.10 L1157.10 747.95 L1157.60 747.81 L1158.10 748.09 L1158.60 747.88 L1159.10 747.89 L1159.60 747.97 L1160.10 748.07 L1160.60 747.64 L1161.10 747.83 L1161.60 748.03 L1162.10 747.95 L1162.60 747.87 L1163.10 747.92 L1163.60 748.21 L1164.10 747.93 L1164.60 748.11 L1165.10 748.12 L1165.60 747.93 L1166.10 748.07 L1166.60 747.93 L1167.10 747.91 L1167.60 747.83 L1168.10 748.13 L1168.60 747.94 L1169.10 747.92 L1169.60 747.83 L1170.10 748.27 L1170.60 748.11 L1171.10 747.98 L1171.60 747.90 L1172.10 747.77 L1172.60 748.04 L1173.10 748.04 L1173.60 747.79 L1174.10 748.17 L1174.60 748.12 L1175.10 747.86 L1175.60 747.92 L1176.10 747.94 L1176.60 748.02 L1177.10 747.98 L1177.60 747.75 L1178.10 748.22 L1178.60 748.05 L1179.10 748.19 L1179.60 748.19 L1180.10 747.97 L1180.60 748.05 L1181.10 748.11 L1181.60 748.12 L1182.10 747.98 L1182.60 747.91 L1183.10 748.01 L1183.60 747.88 L1184.10 747.92" fill="none" stroke="#0000ff" stroke-width="1.9" stroke-linejoin="miter"/>
<line x1="922.90" y1="748.00" x2="922.90" y2="742.20" stroke="#0000ff" stroke-width="2.0" stroke-linecap="butt"/>
<line x1="1069.80" y1="748.00" x2="1069.80" y2="689.50" stroke="#0000ff" stroke-width="2.0" stroke-linecap="butt"/>
<line x1="1130.20" y1="748.00" x2="1130.20" y2="743.00" stroke="#0000ff" stroke-width="2.0" stroke-linecap="butt"/>
<line x1="1132.20" y1="748.00" x2="1132.20" y2="743.50" stroke="#0000ff" stroke-width="2.0" stroke-linecap="butt"/>
<line x1="1179.10" y1="748.00" x2="1179.10" y2="689.50" stroke="#0000ff" stroke-width="2.0" stroke-linecap="butt"/>
<line x1="972.00" y1="748.00" x2="972.00" y2="745.60" stroke="#0000ff" stroke-width="2.0" stroke-linecap="butt"/>
<rect x="910.90" y="516.80" width="274.40" height="119.50" fill="none" stroke="#000" stroke-width="1.39"/>
<rect x="910.90" y="688.80" width="274.40" height="120.20" fill="none" stroke="#000" stroke-width="1.39"/>
<text x="1193.70" y="575.20" font-size="11.04" textLength="38.70" lengthAdjust="spacingAndGlyphs" text-anchor="middle" fill="#000" transform="rotate(90 1193.70 575.20)">cut in x</text>
<text x="1193.70" y="747.60" font-size="11.04" textLength="38.70" lengthAdjust="spacingAndGlyphs" text-anchor="middle" fill="#000" transform="rotate(90 1193.70 747.60)">cut in y</text>
<rect x="1108.8" y="519.6" width="73.20" height="16.70" rx="2" fill="#fff" fill-opacity="0.8" stroke="#d6d6d6" stroke-width="1"/>
<line x1="1111.40" y1="528.00" x2="1133.70" y2="528.00" stroke="#0000ff" stroke-width="1.39" stroke-linecap="butt"/>
<text x="1137.30" y="530.60" font-size="10.67" textLength="40.02" lengthAdjust="spacingAndGlyphs" text-anchor="start" fill="#000">y=1024</text>
<rect x="1108.9" y="692.0" width="72.90" height="15.50" rx="2" fill="#fff" fill-opacity="0.8" stroke="#d6d6d6" stroke-width="1"/>
<line x1="1111.40" y1="699.70" x2="1133.70" y2="699.70" stroke="#0000ff" stroke-width="1.39" stroke-linecap="butt"/>
<text x="1137.30" y="702.60" font-size="10.67" textLength="40.02" lengthAdjust="spacingAndGlyphs" text-anchor="start" fill="#000">x=1024</text>
</svg></body></html>
